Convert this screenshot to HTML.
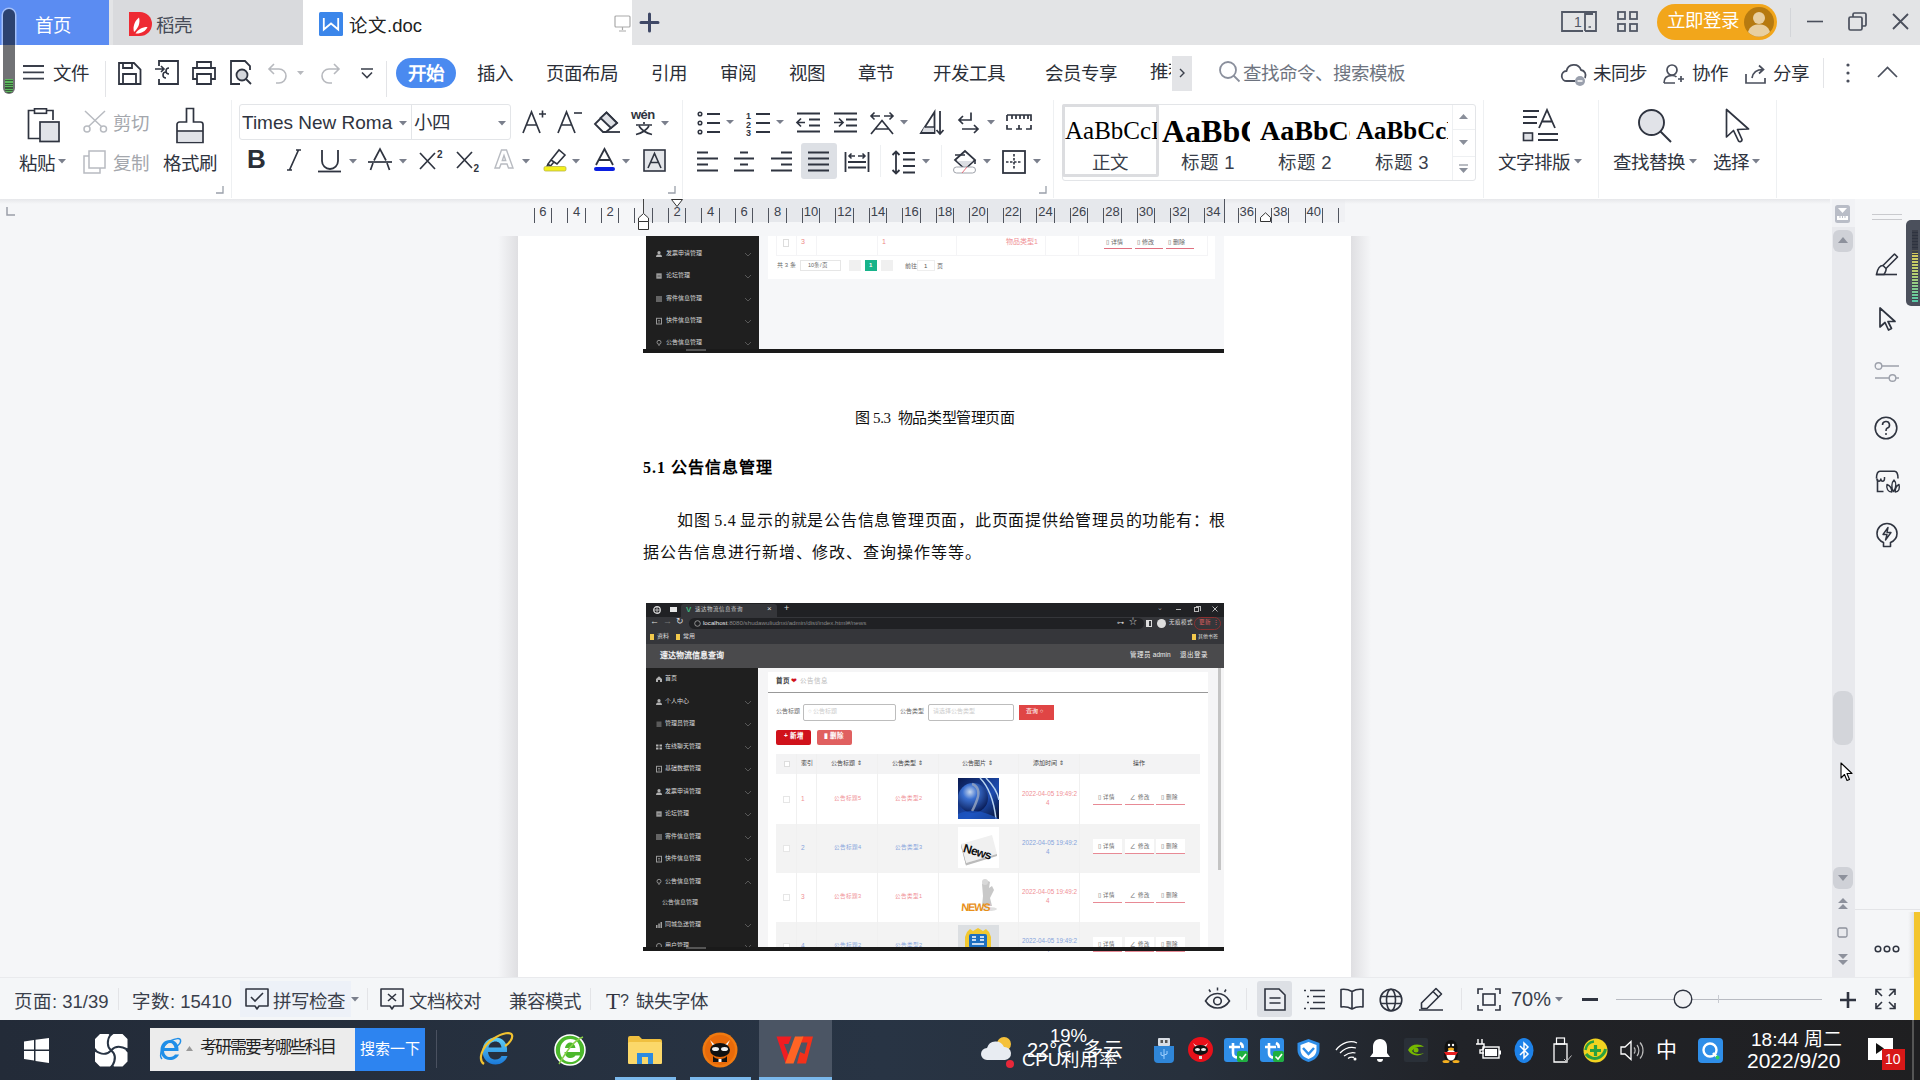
<!DOCTYPE html>
<html lang="zh-CN"><head><meta charset="utf-8">
<style>
*{margin:0;padding:0;box-sizing:border-box}
html,body{width:1920px;height:1080px;overflow:hidden;background:#f5f6f8;font-family:"Liberation Sans",sans-serif;color:#333}
.a{position:absolute}
.t{position:absolute;white-space:nowrap;line-height:1}
svg{position:absolute;overflow:visible}
#tabbar{left:0;top:0;width:1920px;height:45px;background:#e3e4e6}
#menubar{left:0;top:45px;width:1920px;height:55px;background:#fff}
#ribbon{left:0;top:100px;width:1920px;height:99px;background:#fff}
#ruler{left:0;top:199px;width:1830px;height:37px;background:#f3f4f7}
#doc{left:0;top:236px;width:1830px;height:742px;background:#f3f4f7}
#page{left:518px;top:236px;width:833px;height:742px;background:#fff}
#vscroll{left:1830px;top:199px;width:25px;height:779px;background:#e9eaee}
#rpanel{left:1855px;top:199px;width:65px;height:779px;background:#f3f4f7}
#status{left:0;top:978px;width:1920px;height:42px;background:#f8f9fb}
#taskbar{left:0;top:1020px;width:1920px;height:60px;background:#1e2636}
</style></head><body>
<div id="tabbar" class="a">
 <div class="a" style="left:0;top:0;width:109px;height:45px;background:#5b8cf2"></div>
 <div class="t" style="left:35px;top:17px;font-size:18.5px;color:#fff;letter-spacing:-1px">首页</div>
 <div class="a" style="left:113px;top:0;width:190px;height:45px;background:#d9dadd"></div>
 <svg style="left:129px;top:12px" width="24" height="24" viewBox="0 0 24 24"><path d="M0 0H11A12 12 0 0 1 11 24H0Z" fill="#ee2a33"/><path d="M5 20C3.5 15 5.5 9 10 5.5C11.5 10.5 9.5 16 5 20Z" fill="#fff"/><path d="M6.5 21.5C9 17.5 13 15 18.5 15C16.5 19.5 11.5 22 6.5 21.5Z" fill="#fff"/></svg>
 <div class="t" style="left:156px;top:17px;font-size:18.5px;color:#454a57;letter-spacing:-1px">稻壳</div>
 <div class="a" style="left:303px;top:0;width:329px;height:45px;background:#fff"></div>
 <svg style="left:319px;top:12px" width="24" height="24" viewBox="0 0 24 24"><rect width="24" height="24" rx="1.5" fill="#3b86ea"/><path d="M4.8 6V17.5L12 11.5L19.2 17.5V6" fill="none" stroke="#fff" stroke-width="1.8" stroke-linejoin="miter"/></svg>
 <div class="t" style="left:349px;top:17px;font-size:18.5px;color:#222">论文.doc</div>
 <svg style="left:614px;top:15px" width="18" height="17" viewBox="0 0 18 17"><rect x="1" y="1" width="15" height="11" rx="1" fill="none" stroke="#aaa" stroke-width="1.2"/><path d="M8.5 12V15M5 16H12" stroke="#aaa" stroke-width="1.2"/></svg>
 <svg style="left:640px;top:13px" width="19" height="19" viewBox="0 0 19 19"><path d="M9.5 1V18M1 9.5H18" stroke="#3f4866" stroke-width="3" stroke-linecap="round"/></svg>
 <svg style="left:1561px;top:11px" width="36" height="21" viewBox="0 0 36 21"><path d="M22 20H1V1H35V20H24" fill="none" stroke="#525866" stroke-width="1.8"/><path d="M24 20V3H32" fill="none" stroke="#525866" stroke-width="1.8"/><path d="M27.5 16H30" stroke="#525866" stroke-width="1.5"/><text x="13" y="16" font-size="14" fill="#525866" font-family="Liberation Sans">1</text></svg>
 <svg style="left:1617px;top:11px" width="21" height="21" viewBox="0 0 21 21"><g fill="none" stroke="#525866" stroke-width="1.8"><rect x="1" y="1" width="7" height="7"/><rect x="13" y="1" width="7" height="7"/><rect x="1" y="13" width="7" height="7"/><rect x="13" y="13" width="7" height="7"/></g></svg>
 <div class="a" style="left:1657px;top:4px;width:120px;height:36px;border-radius:18px;background:#f2a61b"></div>
 <div class="t" style="left:1667px;top:12px;font-size:18.5px;color:#fff;letter-spacing:-1px">立即登录</div>
 <svg style="left:1744px;top:7px" width="30" height="30" viewBox="0 0 30 30"><circle cx="15" cy="15" r="15" fill="#b67a10"/><circle cx="15" cy="11" r="6" fill="#e8cfa0"/><path d="M4 25C6 19 10 17.5 15 17.5C20 17.5 24 19 26 25A15 15 0 0 1 4 25Z" fill="#e8cfa0"/></svg>
 <div class="a" style="left:1790px;top:8px;width:1px;height:29px;background:#d3d5d9"></div>
 <svg style="left:1807px;top:20px" width="16" height="3" viewBox="0 0 16 3"><path d="M0 1.5H16" stroke="#4a4f5c" stroke-width="1.6"/></svg>
 <svg style="left:1848px;top:12px" width="19" height="19" viewBox="0 0 19 19"><g fill="none" stroke="#4a4f5c" stroke-width="1.7"><rect x="1" y="5" width="13" height="13" rx="1.5"/><path d="M5 5V2.5A1.5 1.5 0 0 1 6.5 1H16.5A1.5 1.5 0 0 1 18 2.5V12.5A1.5 1.5 0 0 1 16.5 14H14"/></g></svg>
 <svg style="left:1892px;top:13px" width="17" height="17" viewBox="0 0 17 17"><path d="M1 1L16 16M16 1L1 16" stroke="#4a4f5c" stroke-width="1.8"/></svg>

</div>
<div id="menubar" class="a">
 <svg style="left:23px;top:20px" width="21" height="15" viewBox="0 0 21 15"><path d="M0 1H21M0 7.3H21M0 13.6H21" stroke="#3a3f4b" stroke-width="1.8"/></svg>
 <div class="t" style="left:53px;top:20px;font-size:18.5px;color:#2b2f38;letter-spacing:-1px">文件</div>
 <div class="a" style="left:105px;top:16px;width:1px;height:36px;background:#e3e4e7"></div>
 <svg style="left:118px;top:17px" width="24" height="23" viewBox="0 0 24 23"><path d="M1 1H16L22.5 7.5V22H1Z" fill="none" stroke="#2f3440" stroke-width="1.8"/><path d="M5 22V12H18V22M5 1V6H14V1" fill="none" stroke="#2f3440" stroke-width="1.8"/></svg>
 <svg style="left:155px;top:15px" width="25" height="25" viewBox="0 0 25 25"><path d="M4 6V1H23V24H4V19" fill="none" stroke="#2f3440" stroke-width="1.8"/><path d="M0 9H9M6 6L9 9L6 12" fill="none" stroke="#2f3440" stroke-width="1.6"/><path d="M14 14A3 3 0 1 1 14 8M11 12A3 3 0 1 0 11 18" fill="none" stroke="#2f3440" stroke-width="1.6"/></svg>
 <svg style="left:192px;top:16px" width="24" height="24" viewBox="0 0 24 24"><path d="M5 7V1H19V7" fill="none" stroke="#2f3440" stroke-width="1.8"/><path d="M5 18H1V7H23V18H19" fill="none" stroke="#2f3440" stroke-width="1.8"/><path d="M5 13H19V23H5Z" fill="none" stroke="#2f3440" stroke-width="1.8"/></svg>
 <svg style="left:230px;top:15px" width="24" height="25" viewBox="0 0 24 25"><path d="M10 24H1V1H15L20 6V10" fill="none" stroke="#2f3440" stroke-width="1.8"/><circle cx="12" cy="15" r="5.5" fill="#d4d6db" stroke="#2f3440" stroke-width="1.8"/><path d="M16 19L21 24" stroke="#2f3440" stroke-width="1.8"/></svg>
 <svg style="left:268px;top:18px" width="40" height="20" viewBox="0 0 40 20"><path d="M6 1L1 6L6 11M1 6H11A7 7 0 0 1 11 20H8" fill="none" stroke="#b7b9be" stroke-width="1.6"/><path d="M29 8H36L32.5 12Z" fill="#b7b9be"/></svg>
 <svg style="left:319px;top:18px" width="22" height="20" viewBox="0 0 22 20"><path d="M15 1L20 6L15 11M20 6H10A7 7 0 0 0 10 20H13" fill="none" stroke="#b7b9be" stroke-width="1.6"/></svg>
 <svg style="left:360px;top:23px" width="14" height="11" viewBox="0 0 14 11"><path d="M1 1H13M2 4.5L7 9.5L12 4.5" fill="none" stroke="#3a3f4b" stroke-width="1.6"/></svg>
 <div class="a" style="left:386px;top:16px;width:1px;height:36px;background:#e3e4e7"></div>
 <div class="a" style="left:396px;top:13px;width:60px;height:30px;border-radius:15px;background:#4a8af0"></div>
 <div class="t" style="left:408px;top:20px;font-size:18.5px;color:#fff;letter-spacing:-1px;font-weight:bold">开始</div>
 <div class="t" style="left:477px;top:20px;font-size:18.5px;color:#2b2f38;letter-spacing:-1px">插入</div>
 <div class="t" style="left:546px;top:20px;font-size:18.5px;color:#2b2f38;letter-spacing:-1px">页面布局</div>
 <div class="t" style="left:651px;top:20px;font-size:18.5px;color:#2b2f38;letter-spacing:-1px">引用</div>
 <div class="t" style="left:720px;top:20px;font-size:18.5px;color:#2b2f38;letter-spacing:-1px">审阅</div>
 <div class="t" style="left:789px;top:20px;font-size:18.5px;color:#2b2f38;letter-spacing:-1px">视图</div>
 <div class="t" style="left:858px;top:20px;font-size:18.5px;color:#2b2f38;letter-spacing:-1px">章节</div>
 <div class="t" style="left:933px;top:20px;font-size:18.5px;color:#2b2f38;letter-spacing:-1px">开发工具</div>
 <div class="t" style="left:1045px;top:20px;font-size:18.5px;color:#2b2f38;letter-spacing:-1px">会员专享</div>
 <div class="a" style="left:1150px;top:18px;width:21px;height:20px;overflow:hidden"><div class="t" style="left:0;top:0;font-size:18.5px;color:#2b2f38;letter-spacing:-1px">推荐</div></div>
 <div class="a" style="left:1172px;top:11px;width:20px;height:35px;background:#e3e4e7"></div>
 <svg style="left:1179px;top:23px" width="6" height="10" viewBox="0 0 6 10"><path d="M1 1L5 5L1 9" fill="none" stroke="#3a3f4b" stroke-width="1.4"/></svg>
 <svg style="left:1219px;top:16px" width="22" height="22" viewBox="0 0 22 22"><circle cx="9" cy="9" r="8" fill="none" stroke="#8a8f9c" stroke-width="1.8"/><path d="M14.5 14.5L20.5 20.5" stroke="#8a8f9c" stroke-width="1.8"/></svg>
 <div class="t" style="left:1243px;top:20px;font-size:18.5px;color:#6e7480;letter-spacing:-1px">查找命令、搜索模板</div>
 <svg style="left:1561px;top:18px" width="26" height="24" viewBox="0 0 26 24"><path d="M14 18H6A5 5 0 0 1 5.5 8A7.5 7.5 0 0 1 20 7A5.5 5.5 0 0 1 24 15" fill="none" stroke="#4a4f5c" stroke-width="1.8"/><circle cx="19" cy="18" r="5" fill="#9aa0ad"/><path d="M16.5 18H21.5" stroke="#fff" stroke-width="1.5"/></svg>
 <div class="t" style="left:1593px;top:20px;font-size:18.5px;color:#2b2f38;letter-spacing:-1px">未同步</div>
 <svg style="left:1663px;top:19px" width="22" height="20" viewBox="0 0 22 20"><circle cx="9" cy="6" r="5" fill="none" stroke="#4a4f5c" stroke-width="1.7"/><path d="M1 19C1 14 4 11.5 9 11.5C11 11.5 12.5 12 13.5 13M1 19H12M15 15H21M18 12V18" fill="none" stroke="#4a4f5c" stroke-width="1.7"/></svg>
 <div class="t" style="left:1692px;top:20px;font-size:18.5px;color:#2b2f38;letter-spacing:-1px">协作</div>
 <svg style="left:1745px;top:19px" width="22" height="20" viewBox="0 0 22 20"><path d="M1 10V19H20V14" fill="none" stroke="#4a4f5c" stroke-width="1.7"/><path d="M7 14C8 8 12 5.5 18 5.5M14 1.5L18.5 5.5L14 9.5" fill="none" stroke="#4a4f5c" stroke-width="1.7"/></svg>
 <div class="t" style="left:1773px;top:20px;font-size:18.5px;color:#2b2f38;letter-spacing:-1px">分享</div>
 <div class="a" style="left:1823px;top:13px;width:1px;height:30px;background:#e3e4e7"></div>
 <svg style="left:1846px;top:18px" width="4" height="20" viewBox="0 0 4 20"><circle cx="2" cy="2" r="1.6" fill="#4a4f5c"/><circle cx="2" cy="10" r="1.6" fill="#4a4f5c"/><circle cx="2" cy="18" r="1.6" fill="#4a4f5c"/></svg>
 <svg style="left:1877px;top:21px" width="21" height="12" viewBox="0 0 21 12"><path d="M1 11L10.5 1.5L20 11" fill="none" stroke="#4a4f5c" stroke-width="1.7"/></svg>
</div>
<div id="ribbon" class="a"></div>
<div id="ribc"><svg style="left:27px;top:108px" width="34" height="36" viewBox="0 0 34 36"><path d="M13 30.5H1.5V2.5H26V12" fill="none" stroke="#2f3440" stroke-width="1.7"/><rect x="7.5" y="0.8" width="12" height="4.5" fill="#fff" stroke="#2f3440" stroke-width="1.6"/><rect x="13" y="14" width="19" height="19.5" fill="#e1e3e8" stroke="#2f3440" stroke-width="1.7"/></svg>
<div class="t" style="left:19px;top:155px;font-size:18.5px;color:#2f3440;letter-spacing:-1px;">粘贴</div><svg style="left:58px;top:159px" width="8" height="5" viewBox="0 0 8 5"><path d="M0 0H8L4 4.5Z" fill="#7a7f8c"/></svg>
<svg style="left:83px;top:110px" width="25" height="23" viewBox="0 0 25 23"><path d="M2 1L19 17M22 1L5 17" stroke="#b8bbc1" stroke-width="1.5"/><circle cx="4" cy="19" r="3" fill="#fff" stroke="#b8bbc1" stroke-width="1.5"/><circle cx="20.5" cy="19" r="3" fill="#fff" stroke="#b8bbc1" stroke-width="1.5"/></svg>
<div class="t" style="left:113px;top:115px;font-size:18.5px;color:#a4a7ad;letter-spacing:-1px;">剪切</div>
<svg style="left:83px;top:150px" width="23" height="24" viewBox="0 0 23 24"><path d="M6 6H1V23H17V18" fill="none" stroke="#b8bbc1" stroke-width="1.5"/><rect x="6" y="1" width="16" height="17" fill="#fff" stroke="#b8bbc1" stroke-width="1.5"/></svg>
<div class="t" style="left:113px;top:155px;font-size:18.5px;color:#a4a7ad;letter-spacing:-1px;">复制</div>
<svg style="left:176px;top:107px" width="28" height="37" viewBox="0 0 28 37"><path d="M10.5 1.5H17.5V15H24.5A2.5 2.5 0 0 1 27 17.5V35.5H1V17.5A2.5 2.5 0 0 1 3.5 15H10.5Z" fill="#fff" stroke="#2f3440" stroke-width="1.7"/><rect x="2" y="24.5" width="24" height="10.2" fill="#e1e3e8"/><path d="M1 24H27" stroke="#2f3440" stroke-width="1.6"/></svg>
<div class="t" style="left:163px;top:155px;font-size:18.5px;color:#2f3440;letter-spacing:-1px;">格式刷</div>
<svg style="left:216px;top:186px" width="8" height="8" viewBox="0 0 8 8"><path d="M7 0V7H0" fill="none" stroke="#9aa0aa" stroke-width="1.3"/></svg>
<div class="a" style="left:231px;top:100px;width:1px;height:98px;background:#eef0f2"></div>
<div class="a" style="left:239px;top:104px;width:272px;height:36px;border:1px solid #e3e5e8;border-radius:3px"></div>
<div class="a" style="left:411px;top:105px;width:1px;height:34px;background:#e3e5e8"></div>
<div class="a" style="left:242px;top:111px;width:151px;height:22px;overflow:hidden"><div class="t" style="left:0;top:2px;font-size:19px;color:#2f3440">Times New Roman</div></div>
<svg style="left:399px;top:121px" width="8" height="5" viewBox="0 0 8 5"><path d="M0 0H8L4 4.5Z" fill="#7a7f8c"/></svg>
<div class="t" style="left:414px;top:114px;font-size:18.5px;color:#2f3440;letter-spacing:-1px;">小四</div>
<svg style="left:498px;top:121px" width="8" height="5" viewBox="0 0 8 5"><path d="M0 0H8L4 4.5Z" fill="#7a7f8c"/></svg>
<svg style="left:522px;top:109px" width="25" height="25" viewBox="0 0 25 25"><path d="M1 24L9.5 3L18 24M4.5 16H14.5" fill="none" stroke="#2f3440" stroke-width="1.7"/><path d="M17 5H24M20.5 1.5V8.5" stroke="#2f3440" stroke-width="1.6"/></svg>
<svg style="left:557px;top:109px" width="26" height="25" viewBox="0 0 26 25"><path d="M1 24L9.5 3L18 24M4.5 16H14.5" fill="none" stroke="#2f3440" stroke-width="1.7"/><path d="M17 4H25" stroke="#2f3440" stroke-width="1.6"/></svg>
<svg style="left:594px;top:111px" width="27" height="23" viewBox="0 0 27 23"><path d="M1 13L12.5 1.5L23 12L12 21H9Z" fill="#fff" stroke="#2f3440" stroke-width="1.8"/><path d="M12.5 1.5L23 12L17 17L6.5 7Z" fill="#dfe1e6" stroke="#2f3440" stroke-width="1.8"/><path d="M12 21H26" stroke="#2f3440" stroke-width="1.8"/></svg>
<div class="t" style="left:631px;top:108px;font-size:13px;color:#2f3440;font-weight:bold;letter-spacing:-0.5px">wén</div>
<svg style="left:634px;top:122px" width="20" height="13" viewBox="0 0 20 13"><path d="M10 0V2M2 3H18M5 4C8 9 12 11 18 12.5M15 4C12 9 8 11 2 12.5" fill="none" stroke="#2f3440" stroke-width="1.7"/></svg>
<svg style="left:661px;top:121px" width="8" height="5" viewBox="0 0 8 5"><path d="M0 0H8L4 4.5Z" fill="#7a7f8c"/></svg>
<div class="t" style="left:247px;top:146px;font-size:26px;font-weight:bold;color:#2b2f38">B</div>
<svg style="left:287px;top:149px" width="14" height="22" viewBox="0 0 14 22"><path d="M9 1H14M0 21H5M11.5 1L2.5 21" fill="none" stroke="#2f3440" stroke-width="1.7"/></svg>
<svg style="left:318px;top:149px" width="24" height="24" viewBox="0 0 24 24"><path d="M4 1V12A8 8 0 0 0 20 12V1" fill="none" stroke="#2f3440" stroke-width="1.8"/><path d="M0 22.5H23" stroke="#2f3440" stroke-width="1.8"/></svg>
<svg style="left:349px;top:159px" width="8" height="5" viewBox="0 0 8 5"><path d="M0 0H8L4 4.5Z" fill="#7a7f8c"/></svg>
<svg style="left:368px;top:148px" width="24" height="23" viewBox="0 0 24 23"><path d="M2.5 22L5 15M19 15L21.5 22M6 12.5L12 1L18 12.5" fill="none" stroke="#2f3440" stroke-width="1.7"/><path d="M0 14H24" stroke="#2f3440" stroke-width="1.7"/></svg>
<svg style="left:399px;top:159px" width="8" height="5" viewBox="0 0 8 5"><path d="M0 0H8L4 4.5Z" fill="#7a7f8c"/></svg>
<svg style="left:419px;top:149px" width="26" height="22" viewBox="0 0 26 22"><path d="M1 4L16 20M16 4L1 20" stroke="#2f3440" stroke-width="1.7"/><text x="18" y="9" font-size="10" font-weight="bold" fill="#2f3440" font-family="Liberation Sans">2</text></svg>
<svg style="left:456px;top:151px" width="26" height="22" viewBox="0 0 26 22"><path d="M1 1L16 17M16 1L1 17" stroke="#2f3440" stroke-width="1.7"/><text x="17.5" y="21" font-size="10" font-weight="bold" fill="#2f3440" font-family="Liberation Sans">2</text></svg>
<svg style="left:494px;top:149px" width="20" height="20" viewBox="0 0 20 20"><path d="M1 19L7.5 1H12.5L19 19H14.5L13 15H7L5.5 19ZM8.3 11.5H11.7L10 6.5Z" fill="#fff" stroke="#b8bbc1" stroke-width="1.4"/></svg>
<svg style="left:522px;top:159px" width="8" height="5" viewBox="0 0 8 5"><path d="M0 0H8L4 4.5Z" fill="#7a7f8c"/></svg>
<svg style="left:543px;top:148px" width="24" height="24" viewBox="0 0 24 24"><path d="M8 12L16 2L22 7L14 16Z M8 12L5 16L7.5 18L10.5 14.5" fill="#fff" stroke="#2f3440" stroke-width="1.6"/><path d="M5 16L4 18H8" stroke="#2f3440" stroke-width="1.4" fill="none"/><rect x="1" y="18.5" width="22" height="4.5" rx="1.5" fill="#f4f01a" stroke="#b7b44a" stroke-width="0.8"/></svg>
<svg style="left:572px;top:159px" width="8" height="5" viewBox="0 0 8 5"><path d="M0 0H8L4 4.5Z" fill="#7a7f8c"/></svg>
<svg style="left:593px;top:148px" width="23" height="24" viewBox="0 0 23 24"><path d="M3 17L11.5 1L20 17M6 12H17" fill="none" stroke="#2f3440" stroke-width="1.8"/><rect x="1" y="19" width="21" height="4" rx="2" fill="#0b1fe0"/></svg>
<svg style="left:622px;top:159px" width="8" height="5" viewBox="0 0 8 5"><path d="M0 0H8L4 4.5Z" fill="#7a7f8c"/></svg>
<svg style="left:643px;top:149px" width="23" height="23" viewBox="0 0 23 23"><rect x="1" y="1" width="21" height="21" fill="#e4e6ea" stroke="#2f3440" stroke-width="1.6"/><path d="M5 19L11.5 4.5L18 19M7.5 13.5H15.5" fill="none" stroke="#2f3440" stroke-width="1.6"/></svg>
<svg style="left:668px;top:186px" width="8" height="8" viewBox="0 0 8 8"><path d="M7 0V7H0" fill="none" stroke="#9aa0aa" stroke-width="1.3"/></svg>
<div class="a" style="left:682px;top:100px;width:1px;height:98px;background:#eef0f2"></div>
<svg style="left:697px;top:111px" width="38" height="24" viewBox="0 0 38 24"><g fill="none" stroke="#2f3440" stroke-width="1.5"><circle cx="3" cy="3" r="1.8"/><circle cx="3" cy="12" r="1.8"/><circle cx="3" cy="21" r="1.8"/></g><path d="M10 3H23M10 12H23M10 21H23" stroke="#2f3440" stroke-width="1.8"/><path d="M29 9H37L33 13Z" fill="#7a7f8c"/></svg>
<svg style="left:746px;top:110px" width="38" height="25" viewBox="0 0 38 25"><text x="0" y="9" font-size="9" font-weight="bold" fill="#2f3440" font-family="Liberation Sans">1</text><text x="0" y="17.5" font-size="9" font-weight="bold" fill="#2f3440" font-family="Liberation Sans">2</text><text x="0" y="26" font-size="9" font-weight="bold" fill="#2f3440" font-family="Liberation Sans">3</text><path d="M10 4H24M10 13H24M10 22H24" stroke="#2f3440" stroke-width="1.8"/><path d="M30 10H38L34 14Z" fill="#7a7f8c"/></svg>
<svg style="left:796px;top:112px" width="25" height="21" viewBox="0 0 25 21"><path d="M1 1.5H24M13 7.5H24M13 13.5H24M1 19.5H24" stroke="#2f3440" stroke-width="1.8"/><path d="M9 10.5H1M5 6.5L1 10.5L5 14.5" fill="none" stroke="#2f3440" stroke-width="1.7"/></svg>
<svg style="left:833px;top:112px" width="25" height="21" viewBox="0 0 25 21"><path d="M1 1.5H24M13 7.5H24M13 13.5H24M1 19.5H24" stroke="#2f3440" stroke-width="1.8"/><path d="M1 10.5H10M6 6.5L10 10.5L6 14.5" fill="none" stroke="#2f3440" stroke-width="1.7"/></svg>
<svg style="left:870px;top:111px" width="25" height="24" viewBox="0 0 25 24"><path d="M1 5H10M4.5 1.5L1 5L4.5 8.5M14 5H23M19.5 1.5L23 5L19.5 8.5" fill="none" stroke="#2f3440" stroke-width="1.6"/><path d="M1 23L12 9.5L23 23M5 18H19" fill="none" stroke="#2f3440" stroke-width="1.7"/></svg>
<svg style="left:900px;top:120px" width="8" height="5" viewBox="0 0 8 5"><path d="M0 0H8L4 4.5Z" fill="#7a7f8c"/></svg>
<svg style="left:920px;top:110px" width="25" height="26" viewBox="0 0 25 26"><path d="M1 23L14.5 2V23Z" fill="#fff" stroke="#2f3440" stroke-width="1.8"/><path d="M4 17.5H14V22H2Z" fill="#dcdee3"/><path d="M5 17H14" stroke="#2f3440" stroke-width="1.5"/><path d="M20 1V24M16.5 20L20 24L23.5 20" fill="none" stroke="#2f3440" stroke-width="1.8"/></svg>
<svg style="left:958px;top:111px" width="22" height="22" viewBox="0 0 22 22"><path d="M13 1.5V9H1M5 5L1 9L5 13M4 18H20M16 14L20 18L16 22" fill="none" stroke="#2f3440" stroke-width="1.7"/></svg>
<svg style="left:987px;top:120px" width="8" height="5" viewBox="0 0 8 5"><path d="M0 0H8L4 4.5Z" fill="#7a7f8c"/></svg>
<svg style="left:1006px;top:114px" width="26" height="16" viewBox="0 0 26 16"><path d="M1 1H25V7M1 1V7M1 11V15H6M10 15H16M13 11V15M20 15H25V11M6 1V5M10 1V5M14 1V5M18 1V5M22 1V5" fill="none" stroke="#2f3440" stroke-width="1.7"/></svg>
<div class="a" style="left:801px;top:143px;width:36px;height:36px;border-radius:3px;background:#dde0e5"></div>
<svg style="left:697px;top:151px" width="24" height="21" viewBox="0 0 24 21"><path d="M0 1.5H11M0 7.5H21M0 13.5H11M0 19.5H21" stroke="#2f3440" stroke-width="1.9"/></svg>
<svg style="left:734px;top:151px" width="24" height="21" viewBox="0 0 24 21"><path d="M6 1.5H14M0 7.5H20M6 13.5H14M0 19.5H20" stroke="#2f3440" stroke-width="1.9"/></svg>
<svg style="left:771px;top:151px" width="24" height="21" viewBox="0 0 24 21"><path d="M10 1.5H21M0 7.5H21M10 13.5H21M0 19.5H21" stroke="#2f3440" stroke-width="1.9"/></svg>
<svg style="left:808px;top:151px" width="24" height="21" viewBox="0 0 24 21"><path d="M0 1.5H21M0 7.5H21M0 13.5H21M0 19.5H21" stroke="#2f3440" stroke-width="1.9"/></svg>
<svg style="left:844px;top:151px" width="26" height="22" viewBox="0 0 26 22"><path d="M1.5 1V21M24.5 1V21M4 11H22M4 16.5H22" stroke="#2f3440" stroke-width="1.8"/><path d="M5 5H11M7.5 2.5L5 5L7.5 7.5M14 5H21M18.5 2.5L21 5L18.5 7.5" fill="none" stroke="#2f3440" stroke-width="1.5"/></svg>
<div class="a" style="left:880px;top:145px;width:1px;height:32px;background:#eef0f2"></div>
<svg style="left:891px;top:150px" width="26" height="25" viewBox="0 0 26 25"><path d="M5 1V24M1.5 5L5 1.5L8.5 5M1.5 20L5 23.5L8.5 20" fill="none" stroke="#2f3440" stroke-width="1.8"/><path d="M12 3H24M12 9.5H24M12 16H24M12 22.5H24" stroke="#2f3440" stroke-width="1.8"/></svg>
<svg style="left:922px;top:159px" width="8" height="5" viewBox="0 0 8 5"><path d="M0 0H8L4 4.5Z" fill="#7a7f8c"/></svg>
<div class="a" style="left:941px;top:145px;width:1px;height:32px;background:#eef0f2"></div>
<svg style="left:953px;top:148px" width="24" height="26" viewBox="0 0 24 26"><path d="M2 12L12 3L22 12L12 21Z" fill="#fff" stroke="#2f3440" stroke-width="1.7"/><path d="M4 13H20L12 20Z" fill="#dcdee3"/><path d="M2 7H12M22 12V16" stroke="#2f3440" stroke-width="1.6"/><rect x="0.5" y="19" width="22" height="6" rx="3" fill="#fff" stroke="#9ea2aa" stroke-width="1"/><path d="M9 25L14 19" stroke="#e05060" stroke-width="0.8"/></svg>
<svg style="left:983px;top:159px" width="8" height="5" viewBox="0 0 8 5"><path d="M0 0H8L4 4.5Z" fill="#7a7f8c"/></svg>
<svg style="left:1002px;top:150px" width="24" height="24" viewBox="0 0 24 24"><rect x="1" y="1" width="22" height="22" fill="none" stroke="#2f3440" stroke-width="1.8"/><path d="M12 4V20M4 12H20" stroke="#2f3440" stroke-width="1.6" stroke-dasharray="2.5 1.5"/></svg>
<svg style="left:1033px;top:159px" width="8" height="5" viewBox="0 0 8 5"><path d="M0 0H8L4 4.5Z" fill="#7a7f8c"/></svg>
<svg style="left:1039px;top:186px" width="8" height="8" viewBox="0 0 8 8"><path d="M7 0V7H0" fill="none" stroke="#9aa0aa" stroke-width="1.3"/></svg>
<div class="a" style="left:1053px;top:100px;width:1px;height:98px;background:#eef0f2"></div>
<div class="a" style="left:1062px;top:104px;width:414px;height:77px;border:1px solid #e3e5e8;border-radius:3px"></div>
<div class="a" style="left:1062px;top:104px;width:97px;height:73px;border:3px solid #dcdde0;border-radius:2px"></div>
<div class="a" style="left:1452px;top:105px;width:1px;height:75px;background:#eef0f2"></div>
<div class="a" style="left:1453px;top:129px;width:22px;height:1px;background:#eef0f2"></div>
<div class="a" style="left:1453px;top:156px;width:22px;height:1px;background:#eef0f2"></div>
<svg style="left:1459px;top:114px" width="9" height="5" viewBox="0 0 9 5"><path d="M0 5H9L4.5 0Z" fill="#8a8f9a"/></svg>
<svg style="left:1459px;top:140px" width="9" height="5" viewBox="0 0 9 5"><path d="M0 0H9L4.5 5Z" fill="#8a8f9a"/></svg>
<svg style="left:1459px;top:164px" width="9" height="9" viewBox="0 0 9 9"><path d="M0 1H9" stroke="#8a8f9a" stroke-width="1.2"/><path d="M0 4H9L4.5 9Z" fill="#8a8f9a"/></svg>
<div class="a" style="left:1065px;top:112px;width:92px;height:36px;overflow:hidden"><div class="t" style="left:0;top:6px;font-family:'Liberation Serif',serif;font-size:25px;color:#000">AaBbCcI</div></div>
<div class="a" style="left:1162px;top:112px;width:88px;height:36px;overflow:hidden"><div class="t" style="left:0;top:3px;font-family:'Liberation Serif',serif;font-size:32px;font-weight:bold;color:#000">AaBbCc</div></div>
<div class="a" style="left:1260px;top:112px;width:90px;height:36px;overflow:hidden"><div class="t" style="left:0;top:5px;font-family:'Liberation Serif',serif;font-size:28px;font-weight:bold;color:#000">AaBbCc</div></div>
<div class="a" style="left:1356px;top:112px;width:92px;height:36px;overflow:hidden"><div class="t" style="left:0;top:6px;font-family:'Liberation Serif',serif;font-size:25px;font-weight:bold;color:#000">AaBbCcI</div></div>
<div class="t" style="left:1092px;top:154px;font-size:18.5px;color:#3a3f4b;letter-spacing:-1px;">正文</div>
<div class="t" style="left:1181px;top:154px;font-size:18.5px;color:#3a3f4b;">标题 1</div>
<div class="t" style="left:1278px;top:154px;font-size:18.5px;color:#3a3f4b;">标题 2</div>
<div class="t" style="left:1375px;top:154px;font-size:18.5px;color:#3a3f4b;">标题 3</div>
<div class="a" style="left:1483px;top:100px;width:1px;height:98px;background:#eef0f2"></div>
<svg style="left:1522px;top:109px" width="37" height="33" viewBox="0 0 37 33"><path d="M1 2H17M1 8H15M1 14H15" stroke="#2f3440" stroke-width="1.8"/><path d="M17 19L25 1L33 19M20 12.5H30" fill="none" stroke="#2f3440" stroke-width="1.8"/><rect x="1.5" y="24" width="9" height="7.5" fill="#dfe1e6" stroke="#2f3440" stroke-width="1.6"/><path d="M16 25H36M16 31H36" stroke="#2f3440" stroke-width="1.8"/></svg>
<div class="t" style="left:1498px;top:154px;font-size:18.5px;color:#2f3440;letter-spacing:-1px;">文字排版</div><svg style="left:1574px;top:159px" width="8" height="5" viewBox="0 0 8 5"><path d="M0 0H8L4 4.5Z" fill="#7a7f8c"/></svg>
<div class="a" style="left:1598px;top:100px;width:1px;height:98px;background:#eef0f2"></div>
<svg style="left:1637px;top:108px" width="36" height="36" viewBox="0 0 36 36"><circle cx="14.5" cy="14.5" r="12.5" fill="#e1e3e8" stroke="#2f3440" stroke-width="1.9"/><path d="M23.5 23.5L34 34" stroke="#2f3440" stroke-width="1.9"/></svg>
<div class="t" style="left:1613px;top:154px;font-size:18.5px;color:#2f3440;letter-spacing:-1px;">查找替换</div><svg style="left:1689px;top:159px" width="8" height="5" viewBox="0 0 8 5"><path d="M0 0H8L4 4.5Z" fill="#7a7f8c"/></svg>
<svg style="left:1725px;top:108px" width="26" height="36" viewBox="0 0 26 36"><path d="M1.5 1.5V29L8.5 22.5L13.5 33A2 2 0 0 0 17 31.5L12.5 21.5L23.5 21Z" fill="#fff" stroke="#2f3440" stroke-width="1.7" stroke-linejoin="round"/></svg>
<div class="t" style="left:1713px;top:154px;font-size:18.5px;color:#2f3440;letter-spacing:-1px;">选择</div><svg style="left:1752px;top:159px" width="8" height="5" viewBox="0 0 8 5"><path d="M0 0H8L4 4.5Z" fill="#7a7f8c"/></svg>
<div class="a" style="left:1776px;top:100px;width:1px;height:98px;background:#eef0f2"></div></div>
<div id="docarea"><div class="a" style="left:0;top:199px;width:1830px;height:37px;background:#f5f6f8"></div>
<div class="a" style="left:1225px;top:199px;width:120px;height:23px;background:#f0f1f4"></div><div class="a" style="left:0;top:199px;width:1830px;height:5px;background:linear-gradient(#e6e7ea,rgba(245,246,248,0))"></div>
<div class="a" style="left:643px;top:199px;width:582px;height:23px;background:#e6e8ec"></div>
<svg style="left:6px;top:207px" width="9" height="9" viewBox="0 0 9 9"><path d="M1 0V8H9" fill="none" stroke="#9a9ea8" stroke-width="1.5"/></svg>
<svg style="left:0;top:0" width="1830" height="236" viewBox="0 0 1830 236"><path d="M534.5 208V223M551.5 208V223M567.5 208V223M585.5 208V223M601.5 208V223M618.5 208V223M634.5 208V223M652.5 208V223M668.5 208V223M685.5 208V223M701.5 208V223M719.5 208V223M735.5 208V223M752.5 208V223M768.5 208V223M786.5 208V223M802.5 208V223M819.5 208V223M835.5 208V223M853.5 208V223M869.5 208V223M886.5 208V223M902.5 208V223M920.5 208V223M936.5 208V223M953.5 208V223M969.5 208V223M987.5 208V223M1003.5 208V223M1020.5 208V223M1036.5 208V223M1054.5 208V223M1070.5 208V223M1087.5 208V223M1103.5 208V223M1121.5 208V223M1137.5 208V223M1154.5 208V223M1170.5 208V223M1188.5 208V223M1204.5 208V223M1238.5 208V223M1255.5 208V223M1271.5 208V223M1288.5 208V223M1305.5 208V223M1322.5 208V223M1338.5 208V223" stroke="#50545e" stroke-width="1"/><path d="M1224.5 199V223" stroke="#50545e" stroke-width="1"/></svg>
<div class="t" style="left:522.9px;top:205px;width:40px;text-align:center;font-size:13px;color:#3d424d">6</div>
<div class="t" style="left:556.5px;top:205px;width:40px;text-align:center;font-size:13px;color:#3d424d">4</div>
<div class="t" style="left:590.0px;top:205px;width:40px;text-align:center;font-size:13px;color:#3d424d">2</div>
<div class="t" style="left:657.0px;top:205px;width:40px;text-align:center;font-size:13px;color:#3d424d">2</div>
<div class="t" style="left:690.5px;top:205px;width:40px;text-align:center;font-size:13px;color:#3d424d">4</div>
<div class="t" style="left:724.0px;top:205px;width:40px;text-align:center;font-size:13px;color:#3d424d">6</div>
<div class="t" style="left:757.5px;top:205px;width:40px;text-align:center;font-size:13px;color:#3d424d">8</div>
<div class="t" style="left:791.0px;top:205px;width:40px;text-align:center;font-size:13px;color:#3d424d">10</div>
<div class="t" style="left:824.5px;top:205px;width:40px;text-align:center;font-size:13px;color:#3d424d">12</div>
<div class="t" style="left:858.0px;top:205px;width:40px;text-align:center;font-size:13px;color:#3d424d">14</div>
<div class="t" style="left:891.6px;top:205px;width:40px;text-align:center;font-size:13px;color:#3d424d">16</div>
<div class="t" style="left:925.1px;top:205px;width:40px;text-align:center;font-size:13px;color:#3d424d">18</div>
<div class="t" style="left:958.6px;top:205px;width:40px;text-align:center;font-size:13px;color:#3d424d">20</div>
<div class="t" style="left:992.1px;top:205px;width:40px;text-align:center;font-size:13px;color:#3d424d">22</div>
<div class="t" style="left:1025.6px;top:205px;width:40px;text-align:center;font-size:13px;color:#3d424d">24</div>
<div class="t" style="left:1059.1px;top:205px;width:40px;text-align:center;font-size:13px;color:#3d424d">26</div>
<div class="t" style="left:1092.6px;top:205px;width:40px;text-align:center;font-size:13px;color:#3d424d">28</div>
<div class="t" style="left:1126.1px;top:205px;width:40px;text-align:center;font-size:13px;color:#3d424d">30</div>
<div class="t" style="left:1159.6px;top:205px;width:40px;text-align:center;font-size:13px;color:#3d424d">32</div>
<div class="t" style="left:1193.2px;top:205px;width:40px;text-align:center;font-size:13px;color:#3d424d">34</div>
<div class="t" style="left:1226.7px;top:205px;width:40px;text-align:center;font-size:13px;color:#3d424d">36</div>
<div class="t" style="left:1260.2px;top:205px;width:40px;text-align:center;font-size:13px;color:#3d424d">38</div>
<div class="t" style="left:1293.7px;top:205px;width:40px;text-align:center;font-size:13px;color:#3d424d">40</div>

<svg style="left:637px;top:199px" width="50" height="32" viewBox="0 0 50 32"><path d="M6.5 0V14" stroke="#444" stroke-width="1"/><path d="M34.5 0.5H45.5L40 7.5Z" fill="#fff" stroke="#333" stroke-width="1"/><path d="M1.5 22.5V19L6.5 14.5L11.5 19V22.5H1.5V30.5H11.5V22.5" fill="#fff" stroke="#333" stroke-width="1"/><path d="M2 30H11V23H2Z" fill="#fff"/></svg>
<svg style="left:1260px;top:212px" width="12" height="11" viewBox="0 0 12 11"><path d="M0.5 9.5V5.5L5.5 0.8L10.5 5.5V9.5Z" fill="#fff" stroke="#333" stroke-width="1"/></svg>
<div class="a" style="left:498px;top:236px;width:20px;height:741px;background:linear-gradient(90deg,#f5f6f8,#dfdfe2)"></div>
<div class="a" style="left:1351px;top:236px;width:20px;height:741px;background:linear-gradient(90deg,#dfdfe2,#f5f6f8)"></div>
<div class="a" style="left:518px;top:236px;width:833px;height:741px;background:#fff"></div>
<div class="t" style="left:855px;top:411px;font-size:15px;letter-spacing:-0.35px;color:#111;font-family:'Liberation Serif',serif;">图 5.3&nbsp; 物品类型管理页面</div>
<div class="t" style="left:643px;top:460px;font-size:16px;color:#000;font-weight:bold;letter-spacing:1px;font-family:'Liberation Serif',serif;">5.1 公告信息管理</div>
<div class="t" style="left:677px;top:513px;font-size:16px;color:#111;font-family:'Liberation Serif',serif;word-spacing:-1px;letter-spacing:0.75px">如图 5.4 显示的就是公告信息管理页面，此页面提供给管理员的功能有：根</div>
<div class="t" style="left:643px;top:545px;font-size:16px;color:#111;font-family:'Liberation Serif',serif;letter-spacing:0.95px">据公告信息进行新增、修改、查询操作等等。</div></div>
<div id="shots"><div class="a" style="left:646px;top:236px;width:578px;height:114px;background:#f6f7f9"></div>
<div class="a" style="left:646px;top:236px;width:113px;height:114px;background:#1f1f1f"></div>
<div class="a" style="left:768px;top:236px;width:447px;height:43px;background:#fff"></div>
<div class="a" style="left:776px;top:236px;width:432px;height:20px;border:1px solid #f4f4f6;border-top:none"></div>
<div class="a" style="left:796px;top:236px;width:1px;height:20px;background:#f4f4f6"></div>
<div class="a" style="left:816px;top:236px;width:1px;height:20px;background:#f4f4f6"></div>
<div class="a" style="left:877px;top:236px;width:1px;height:20px;background:#f4f4f6"></div>
<div class="a" style="left:956px;top:236px;width:1px;height:20px;background:#f4f4f6"></div>
<div class="a" style="left:1045px;top:236px;width:1px;height:20px;background:#f4f4f6"></div>
<div class="a" style="left:1078px;top:236px;width:1px;height:20px;background:#f4f4f6"></div>
<div class="a" style="left:783px;top:239px;width:6px;height:8px;border:1px solid #ddd"></div>
<div class="t" style="left:801px;top:238px;font-size:7px;color:#e88;">3</div>
<div class="t" style="left:882px;top:238px;font-size:7px;color:#e88;">1</div>
<div class="t" style="left:1006px;top:238px;font-size:7px;color:#ef8f96;">物品类型1</div>
<div class="t" style="left:1106px;top:239px;font-size:6px;color:#666;">▯ 详情</div>
<div class="a" style="left:1104px;top:248px;width:28px;height:1px;background:#e07080"></div>
<div class="t" style="left:1137px;top:239px;font-size:6px;color:#666;">▯ 修改</div>
<div class="a" style="left:1135px;top:248px;width:28px;height:1px;background:#e07080"></div>
<div class="t" style="left:1168px;top:239px;font-size:6px;color:#666;">▯ 删除</div>
<div class="a" style="left:1166px;top:248px;width:28px;height:1px;background:#e07080"></div>
<div class="t" style="left:777px;top:262px;font-size:6px;color:#666;">共 3 条</div>
<div class="a" style="left:800px;top:260px;width:41px;height:11px;border:1px solid #e6e6e6;background:#fff"></div>
<div class="t" style="left:808px;top:263px;font-size:5.5px;color:#666;">10条/页</div>
<div class="a" style="left:849px;top:260px;width:12px;height:11px;background:#f0f0f0"></div>
<div class="a" style="left:865px;top:260px;width:12px;height:11px;background:#17b38a"></div>
<div class="t" style="left:869px;top:262px;font-size:6px;color:#fff;font-weight:bold">1</div>
<div class="a" style="left:881px;top:260px;width:12px;height:11px;background:#f0f0f0"></div>
<div class="t" style="left:905px;top:263px;font-size:6px;color:#666;">前往</div>
<div class="a" style="left:917px;top:260px;width:18px;height:11px;border:1px solid #eee;background:#fff"></div>
<div class="t" style="left:924px;top:263px;font-size:6px;color:#555;">1</div>
<div class="t" style="left:937px;top:263px;font-size:6px;color:#666;">页</div>
<svg style="left:656px;top:251px" width="6" height="6" viewBox="0 0 6 6"><circle cx="3" cy="1.7" r="1.6" fill="#b0b0b0"/><path d="M0 6C0 4 1.2 3.6 3 3.6S6 4 6 6Z" fill="#b0b0b0"/></svg>
<div class="t" style="left:666px;top:250px;font-size:6px;color:#dadada">发票申请管理</div>
<svg style="left:745px;top:252px" width="6" height="5" viewBox="0 0 6 5"><path d="M0 1L3 4L6 1" fill="none" stroke="#666" stroke-width="0.8"/></svg>
<svg style="left:656px;top:273px" width="6" height="6" viewBox="0 0 6 6"><rect x="0.3" y="0.3" width="5.4" height="5.4" fill="#9a9a9a"/><path d="M1.5 3H4.5" stroke="#333" stroke-width="0.7"/></svg>
<div class="t" style="left:666px;top:272px;font-size:6px;color:#dadada">论坛管理</div>
<svg style="left:745px;top:274px" width="6" height="5" viewBox="0 0 6 5"><path d="M0 1L3 4L6 1" fill="none" stroke="#666" stroke-width="0.8"/></svg>
<svg style="left:656px;top:296px" width="6" height="6" viewBox="0 0 6 6"><path d="M0 1H6M0 3H6M0 5H6" stroke="#aaa" stroke-width="1"/></svg>
<div class="t" style="left:666px;top:295px;font-size:6px;color:#dadada">寄件信息管理</div>
<svg style="left:745px;top:297px" width="6" height="5" viewBox="0 0 6 5"><path d="M0 1L3 4L6 1" fill="none" stroke="#666" stroke-width="0.8"/></svg>
<svg style="left:656px;top:318px" width="6" height="6" viewBox="0 0 6 6"><rect x="0.5" y="0.3" width="5" height="5.7" fill="none" stroke="#999" stroke-width="1"/><path d="M2 2.5H4M2 4H4" stroke="#999" stroke-width="0.7"/></svg>
<div class="t" style="left:666px;top:317px;font-size:6px;color:#dadada">快件信息管理</div>
<svg style="left:745px;top:319px" width="6" height="5" viewBox="0 0 6 5"><path d="M0 1L3 4L6 1" fill="none" stroke="#666" stroke-width="0.8"/></svg>
<svg style="left:656px;top:340px" width="6" height="6" viewBox="0 0 6 6"><circle cx="3" cy="2.3" r="2" fill="none" stroke="#999" stroke-width="0.9"/><path d="M3 4.3V6" stroke="#999" stroke-width="0.9"/></svg>
<div class="t" style="left:666px;top:339px;font-size:6px;color:#dadada">公告信息管理</div>
<svg style="left:745px;top:341px" width="6" height="5" viewBox="0 0 6 5"><path d="M0 1L3 4L6 1" fill="none" stroke="#666" stroke-width="0.8"/></svg>
<div class="a" style="left:643px;top:349px;width:581px;height:4px;background:#1a1a1a"></div>
<div class="a" style="left:686px;top:349px;width:20px;height:2px;background:#555"></div>
<div class="a" style="left:646px;top:603px;width:578px;height:347px;background:#f7f7f8"></div>
<div class="a" style="left:646px;top:603px;width:578px;height:14px;background:#202124"></div>
<div class="a" style="left:681px;top:604px;width:96px;height:13px;background:#35363a;border-radius:3px 3px 0 0"></div>
<svg style="left:653px;top:606px" width="8" height="8" viewBox="0 0 8 8"><circle cx="4" cy="4" r="3.3" fill="none" stroke="#ddd" stroke-width="1.2"/><path d="M1 4H7M4 1V7" stroke="#ddd" stroke-width="0.8"/></svg>
<div class="a" style="left:670px;top:607px;width:7px;height:5px;background:#e6e6e6"></div>
<div class="t" style="left:686px;top:606px;font-size:8px;color:#3fb27f;font-weight:bold">V</div>
<div class="t" style="left:695px;top:607px;font-size:5.5px;color:#ccc;">速达物流信息查询</div>
<div class="t" style="left:767px;top:605px;font-size:8px;color:#ddd;">×</div>
<div class="t" style="left:784px;top:604px;font-size:9px;color:#ddd;">+</div>
<div class="t" style="left:1157px;top:604px;font-size:7px;color:#999;">⌄</div>
<div class="a" style="left:1176px;top:609px;width:5px;height:1px;background:#bbb"></div>
<div class="a" style="left:1194px;top:607px;width:5px;height:5px;border:0.8px solid #bbb"></div><div class="a" style="left:1195.5px;top:605.5px;width:5px;height:5px;border-top:0.8px solid #bbb;border-right:0.8px solid #bbb"></div>
<svg style="left:1212px;top:606px" width="6" height="6" viewBox="0 0 6 6"><path d="M0.5 0.5L5.5 5.5M5.5 0.5L0.5 5.5" stroke="#ccc" stroke-width="0.9"/></svg>
<div class="a" style="left:646px;top:617px;width:578px;height:27px;background:#35363a"></div>
<div class="t" style="left:650px;top:617px;font-size:9px;color:#ddd;">←</div>
<div class="t" style="left:663px;top:617px;font-size:9px;color:#777;">→</div>
<div class="t" style="left:676px;top:617px;font-size:9px;color:#ddd;">↻</div>
<div class="a" style="left:689px;top:618px;width:455px;height:11px;border-radius:6px;background:#202124"></div>
<svg style="left:694px;top:620px" width="7" height="7" viewBox="0 0 7 7"><circle cx="3.5" cy="3.5" r="2.8" fill="none" stroke="#aaa" stroke-width="0.8"/></svg>
<div class="t" style="left:703px;top:620px;font-size:6.2px;color:#e8e8e8;">localhost<span style="color:#888">:8080/shudawuliudnxi/admin/dist/index.html#/news</span></div>
<div class="t" style="left:1117px;top:619px;font-size:7px;color:#ccc;">⊶</div>
<div class="t" style="left:1129px;top:618px;font-size:8px;color:#ccc;">☆</div>
<div class="a" style="left:1146px;top:620px;width:6px;height:7px;border:1px solid #ddd;border-left-width:3px"></div>
<div class="a" style="left:1157px;top:619px;width:9px;height:9px;border-radius:5px;background:#ddd"></div>
<div class="t" style="left:1169px;top:620px;font-size:5.5px;color:#ddd;">无痕模式</div>
<div class="a" style="left:1194px;top:617px;width:27px;height:13px;border-radius:7px;border:1px solid #8a3030"></div>
<div class="t" style="left:1199px;top:620px;font-size:5.5px;color:#e06060;">更新 ⋮</div>
<div class="a" style="left:650px;top:634px;width:4px;height:6px;background:#f2c94c"></div>
<div class="t" style="left:657px;top:633px;font-size:6px;color:#ddd;">资料</div>
<div class="a" style="left:676px;top:634px;width:4px;height:6px;background:#f2c94c"></div>
<div class="t" style="left:683px;top:633px;font-size:6px;color:#ddd;">常用</div>
<div class="a" style="left:1192px;top:634px;width:4px;height:6px;background:#f2c94c"></div>
<div class="t" style="left:1198px;top:634px;font-size:5px;color:#ddd;">其他书签</div>
<div class="a" style="left:646px;top:644px;width:578px;height:24px;background:#4a4a4c"></div>
<div class="t" style="left:660px;top:652px;font-size:8px;color:#f2f2f2;font-weight:bold">速达物流信息查询</div>
<div class="t" style="left:1130px;top:652px;font-size:6.5px;color:#eee;">管理员 admin</div>
<div class="t" style="left:1180px;top:652px;font-size:6.5px;color:#eee;">退出登录</div>
<div class="a" style="left:646px;top:668px;width:112px;height:282px;background:#1f1f1f"></div>
<svg style="left:656px;top:676px" width="6" height="6" viewBox="0 0 6 6"><path d="M0 3L3 0.2L6 3V6H4V4H2V6H0Z" fill="#b0b0b0"/></svg>
<div class="t" style="left:665px;top:675px;font-size:6px;color:#dadada">首页</div>
<svg style="left:656px;top:699px" width="6" height="6" viewBox="0 0 6 6"><circle cx="3" cy="1.7" r="1.6" fill="#b0b0b0"/><path d="M0 6C0 4 1.2 3.6 3 3.6S6 4 6 6Z" fill="#b0b0b0"/></svg>
<div class="t" style="left:665px;top:698px;font-size:6px;color:#dadada">个人中心</div>
<svg style="left:745px;top:700px" width="6" height="5" viewBox="0 0 6 5"><path d="M0 1L3 4L6 1" fill="none" stroke="#666" stroke-width="0.8"/></svg>
<svg style="left:656px;top:721px" width="6" height="6" viewBox="0 0 6 6"><rect x="0.5" y="0.5" width="5" height="5.5" fill="#5a5a5a"/></svg>
<div class="t" style="left:665px;top:720px;font-size:6px;color:#dadada">管理员管理</div>
<svg style="left:745px;top:722px" width="6" height="5" viewBox="0 0 6 5"><path d="M0 1L3 4L6 1" fill="none" stroke="#666" stroke-width="0.8"/></svg>
<svg style="left:656px;top:744px" width="6" height="6" viewBox="0 0 6 6"><rect x="0" y="0.5" width="2.5" height="2" fill="#b0b0b0"/><rect x="3.5" y="0.5" width="2.5" height="2" fill="#b0b0b0"/><rect x="0" y="3.5" width="2.5" height="2" fill="#b0b0b0"/><rect x="3.5" y="3.5" width="2.5" height="2" fill="#b0b0b0"/></svg>
<div class="t" style="left:665px;top:743px;font-size:6px;color:#dadada">在线聊天管理</div>
<svg style="left:745px;top:745px" width="6" height="5" viewBox="0 0 6 5"><path d="M0 1L3 4L6 1" fill="none" stroke="#666" stroke-width="0.8"/></svg>
<svg style="left:656px;top:766px" width="6" height="6" viewBox="0 0 6 6"><rect x="0.5" y="0.3" width="5" height="5.7" fill="none" stroke="#999" stroke-width="1"/><path d="M2 2.5H4M2 4H4" stroke="#999" stroke-width="0.7"/></svg>
<div class="t" style="left:665px;top:765px;font-size:6px;color:#dadada">基础数据管理</div>
<svg style="left:745px;top:767px" width="6" height="5" viewBox="0 0 6 5"><path d="M0 1L3 4L6 1" fill="none" stroke="#666" stroke-width="0.8"/></svg>
<svg style="left:656px;top:789px" width="6" height="6" viewBox="0 0 6 6"><circle cx="3" cy="1.7" r="1.6" fill="#b0b0b0"/><path d="M0 6C0 4 1.2 3.6 3 3.6S6 4 6 6Z" fill="#b0b0b0"/></svg>
<div class="t" style="left:665px;top:788px;font-size:6px;color:#dadada">发票申请管理</div>
<svg style="left:745px;top:790px" width="6" height="5" viewBox="0 0 6 5"><path d="M0 1L3 4L6 1" fill="none" stroke="#666" stroke-width="0.8"/></svg>
<svg style="left:656px;top:811px" width="6" height="6" viewBox="0 0 6 6"><rect x="0.3" y="0.3" width="5.4" height="5.4" fill="#9a9a9a"/><path d="M1.5 3H4.5" stroke="#333" stroke-width="0.7"/></svg>
<div class="t" style="left:665px;top:810px;font-size:6px;color:#dadada">论坛管理</div>
<svg style="left:745px;top:812px" width="6" height="5" viewBox="0 0 6 5"><path d="M0 1L3 4L6 1" fill="none" stroke="#666" stroke-width="0.8"/></svg>
<svg style="left:656px;top:834px" width="6" height="6" viewBox="0 0 6 6"><path d="M0 1H6M0 3H6M0 5H6" stroke="#aaa" stroke-width="1"/></svg>
<div class="t" style="left:665px;top:833px;font-size:6px;color:#dadada">寄件信息管理</div>
<svg style="left:745px;top:835px" width="6" height="5" viewBox="0 0 6 5"><path d="M0 1L3 4L6 1" fill="none" stroke="#666" stroke-width="0.8"/></svg>
<svg style="left:656px;top:856px" width="6" height="6" viewBox="0 0 6 6"><rect x="0.5" y="0.3" width="5" height="5.7" fill="none" stroke="#999" stroke-width="1"/><path d="M2 2.5H4M2 4H4" stroke="#999" stroke-width="0.7"/></svg>
<div class="t" style="left:665px;top:855px;font-size:6px;color:#dadada">快件信息管理</div>
<svg style="left:745px;top:857px" width="6" height="5" viewBox="0 0 6 5"><path d="M0 1L3 4L6 1" fill="none" stroke="#666" stroke-width="0.8"/></svg>
<svg style="left:656px;top:879px" width="6" height="6" viewBox="0 0 6 6"><circle cx="3" cy="2.3" r="2" fill="none" stroke="#999" stroke-width="0.9"/><path d="M3 4.3V6" stroke="#999" stroke-width="0.9"/></svg>
<div class="t" style="left:665px;top:878px;font-size:6px;color:#dadada">公告信息管理</div>
<svg style="left:745px;top:880px" width="6" height="5" viewBox="0 0 6 5"><path d="M0 4L3 1L6 4" fill="none" stroke="#666" stroke-width="0.8"/></svg>
<svg style="left:656px;top:922px" width="6" height="6" viewBox="0 0 6 6"><path d="M0 6V3H1.5V6ZM2.3 6V1.5H3.8V6ZM4.5 6V0H6V6Z" fill="#a0a0a0"/></svg>
<div class="t" style="left:665px;top:921px;font-size:6px;color:#dadada">同城急送管理</div>
<svg style="left:745px;top:923px" width="6" height="5" viewBox="0 0 6 5"><path d="M0 1L3 4L6 1" fill="none" stroke="#666" stroke-width="0.8"/></svg>
<svg style="left:656px;top:943px" width="6" height="6" viewBox="0 0 6 6"><circle cx="3" cy="3" r="2.5" fill="none" stroke="#999" stroke-width="0.9"/></svg>
<div class="t" style="left:665px;top:942px;font-size:6px;color:#dadada">用户管理</div>
<svg style="left:745px;top:944px" width="6" height="5" viewBox="0 0 6 5"><path d="M0 1L3 4L6 1" fill="none" stroke="#666" stroke-width="0.8"/></svg>
<div class="t" style="left:662px;top:899px;font-size:6px;color:#d0d0d0">公告信息管理</div>
<div class="a" style="left:759px;top:668px;width:465px;height:282px;background:#f5f5f6"></div>
<div class="a" style="left:768px;top:672px;width:440px;height:278px;background:#fff"></div>
<div class="t" style="left:776px;top:678px;font-size:6.5px;color:#333;font-weight:bold">首页</div>
<div class="t" style="left:791px;top:677px;font-size:7px;color:#d0121b;">❤</div>
<div class="t" style="left:800px;top:678px;font-size:6.5px;color:#bbb;">公告信息</div>
<div class="a" style="left:768px;top:692px;width:440px;height:1px;background:#999"></div>
<div class="t" style="left:776px;top:708px;font-size:6px;color:#666;">公告标题</div>
<div class="a" style="left:803px;top:704px;width:93px;height:17px;border:1px solid #bdbdbd;border-radius:2px"></div>
<div class="t" style="left:808px;top:708px;font-size:6px;color:#ccc;">○ 公告标题</div>
<div class="t" style="left:900px;top:708px;font-size:6px;color:#666;">公告类型</div>
<div class="a" style="left:928px;top:704px;width:86px;height:17px;border:1px solid #bdbdbd;border-radius:2px"></div>
<div class="t" style="left:933px;top:708px;font-size:6px;color:#ccc;">请选择公告类型</div>
<div class="a" style="left:1019px;top:705px;width:35px;height:15px;background:#e04545"></div>
<div class="t" style="left:1026px;top:708px;font-size:6px;color:#fff;">查询 ○</div>
<div class="a" style="left:776px;top:730px;width:35px;height:15px;background:#d0121b;border-radius:2px"></div>
<div class="t" style="left:784px;top:733px;font-size:6.5px;color:#fff;font-weight:bold">+ 新增</div>
<div class="a" style="left:817px;top:730px;width:35px;height:15px;background:#e06060;border-radius:2px"></div>
<div class="t" style="left:824px;top:733px;font-size:6.5px;color:#fff;font-weight:bold">▮ 删除</div>
<div class="a" style="left:776px;top:754px;width:424px;height:20px;background:#f3f3f4"></div>
<div class="a" style="left:776px;top:824px;width:424px;height:49px;background:#f3f3f3"></div>
<div class="a" style="left:776px;top:922px;width:424px;height:28px;background:#f3f3f3"></div>
<div class="a" style="left:796px;top:754px;width:1px;height:196px;background:#f0f0f0"></div>
<div class="a" style="left:816px;top:754px;width:1px;height:196px;background:#f0f0f0"></div>
<div class="a" style="left:877px;top:754px;width:1px;height:196px;background:#f0f0f0"></div>
<div class="a" style="left:938px;top:754px;width:1px;height:196px;background:#f0f0f0"></div>
<div class="a" style="left:1018px;top:754px;width:1px;height:196px;background:#f0f0f0"></div>
<div class="a" style="left:1079px;top:754px;width:1px;height:196px;background:#f0f0f0"></div>
<div class="a" style="left:784px;top:761px;width:6px;height:6px;border:1px solid #ddd;background:#fff"></div>
<div class="t" style="left:801px;top:760px;font-size:6px;color:#444;">索引</div>
<div class="t" style="left:831px;top:760px;font-size:6px;color:#444;">公告标题 ⇕</div>
<div class="t" style="left:892px;top:760px;font-size:6px;color:#444;">公告类型 ⇕</div>
<div class="t" style="left:962px;top:760px;font-size:6px;color:#444;">公告图片 ⇕</div>
<div class="t" style="left:1033px;top:760px;font-size:6px;color:#444;">添加时间 ⇕</div>
<div class="t" style="left:1133px;top:760px;font-size:6px;color:#444;">操作</div>
<div class="a" style="left:783px;top:796px;width:7px;height:7px;border:1px solid #e6e6e6;background:#fff"></div>
<div class="t" style="left:801px;top:796px;font-size:6.5px;color:#ef8f96;">1</div>
<div class="t" style="left:834px;top:796px;font-size:5.6px;color:#ef8f96;">公告标题5</div>
<div class="t" style="left:895px;top:796px;font-size:5.6px;color:#ef8f96;">公告类型2</div>
<div class="t" style="left:1022px;top:791px;font-size:6.3px;color:#ef8f96;">2022-04-05 19:49:2</div>
<div class="t" style="left:1046px;top:800px;font-size:6.3px;color:#ef8f96;">4</div>
<div class="t" style="left:1098px;top:795px;font-size:5.5px;color:#6a6a6a;">▯ 详情</div>
<div class="a" style="left:1093px;top:804px;width:29px;height:1px;background:#e88a95"></div>
<div class="t" style="left:1130px;top:795px;font-size:5.5px;color:#6a6a6a;">∠ 修改</div>
<div class="a" style="left:1125px;top:804px;width:29px;height:1px;background:#e88a95"></div>
<div class="t" style="left:1161px;top:795px;font-size:5.5px;color:#6a6a6a;">▯ 删除</div>
<div class="a" style="left:1156px;top:804px;width:29px;height:1px;background:#e88a95"></div>
<div class="a" style="left:783px;top:845px;width:7px;height:7px;border:1px solid #e6e6e6;background:#fff"></div>
<div class="t" style="left:801px;top:845px;font-size:6.5px;color:#86a3dc;">2</div>
<div class="t" style="left:834px;top:845px;font-size:5.6px;color:#86a3dc;">公告标题4</div>
<div class="t" style="left:895px;top:845px;font-size:5.6px;color:#86a3dc;">公告类型3</div>
<div class="t" style="left:1022px;top:840px;font-size:6.3px;color:#86a3dc;">2022-04-05 19:49:2</div>
<div class="t" style="left:1046px;top:849px;font-size:6.3px;color:#86a3dc;">4</div>
<div class="a" style="left:1093px;top:839px;width:29px;height:15px;background:#fff"></div>
<div class="t" style="left:1098px;top:844px;font-size:5.5px;color:#6a6a6a;">▯ 详情</div>
<div class="a" style="left:1093px;top:853px;width:29px;height:1px;background:#e88a95"></div>
<div class="a" style="left:1125px;top:839px;width:29px;height:15px;background:#fff"></div>
<div class="t" style="left:1130px;top:844px;font-size:5.5px;color:#6a6a6a;">∠ 修改</div>
<div class="a" style="left:1125px;top:853px;width:29px;height:1px;background:#e88a95"></div>
<div class="a" style="left:1156px;top:839px;width:29px;height:15px;background:#fff"></div>
<div class="t" style="left:1161px;top:844px;font-size:5.5px;color:#6a6a6a;">▯ 删除</div>
<div class="a" style="left:1156px;top:853px;width:29px;height:1px;background:#e88a95"></div>
<div class="a" style="left:783px;top:894px;width:7px;height:7px;border:1px solid #e6e6e6;background:#fff"></div>
<div class="t" style="left:801px;top:894px;font-size:6.5px;color:#ef8f96;">3</div>
<div class="t" style="left:834px;top:894px;font-size:5.6px;color:#ef8f96;">公告标题3</div>
<div class="t" style="left:895px;top:894px;font-size:5.6px;color:#ef8f96;">公告类型1</div>
<div class="t" style="left:1022px;top:889px;font-size:6.3px;color:#ef8f96;">2022-04-05 19:49:2</div>
<div class="t" style="left:1046px;top:898px;font-size:6.3px;color:#ef8f96;">4</div>
<div class="t" style="left:1098px;top:893px;font-size:5.5px;color:#6a6a6a;">▯ 详情</div>
<div class="a" style="left:1093px;top:902px;width:29px;height:1px;background:#e88a95"></div>
<div class="t" style="left:1130px;top:893px;font-size:5.5px;color:#6a6a6a;">∠ 修改</div>
<div class="a" style="left:1125px;top:902px;width:29px;height:1px;background:#e88a95"></div>
<div class="t" style="left:1161px;top:893px;font-size:5.5px;color:#6a6a6a;">▯ 删除</div>
<div class="a" style="left:1156px;top:902px;width:29px;height:1px;background:#e88a95"></div>
<div class="a" style="left:783px;top:943px;width:7px;height:7px;border:1px solid #e6e6e6;background:#fff"></div>
<div class="t" style="left:801px;top:943px;font-size:6.5px;color:#86a3dc;">4</div>
<div class="t" style="left:834px;top:943px;font-size:5.6px;color:#86a3dc;">公告标题2</div>
<div class="t" style="left:895px;top:943px;font-size:5.6px;color:#86a3dc;">公告类型2</div>
<div class="t" style="left:1022px;top:938px;font-size:6.3px;color:#86a3dc;">2022-04-05 19:49:2</div>
<div class="t" style="left:1046px;top:947px;font-size:6.3px;color:#86a3dc;">4</div>
<div class="a" style="left:1093px;top:937px;width:29px;height:15px;background:#fff"></div>
<div class="t" style="left:1098px;top:942px;font-size:5.5px;color:#6a6a6a;">▯ 详情</div>
<div class="a" style="left:1093px;top:951px;width:29px;height:1px;background:#e88a95"></div>
<div class="a" style="left:1125px;top:937px;width:29px;height:15px;background:#fff"></div>
<div class="t" style="left:1130px;top:942px;font-size:5.5px;color:#6a6a6a;">∠ 修改</div>
<div class="a" style="left:1125px;top:951px;width:29px;height:1px;background:#e88a95"></div>
<div class="a" style="left:1156px;top:937px;width:29px;height:15px;background:#fff"></div>
<div class="t" style="left:1161px;top:942px;font-size:5.5px;color:#6a6a6a;">▯ 删除</div>
<div class="a" style="left:1156px;top:951px;width:29px;height:1px;background:#e88a95"></div>
<svg style="left:958px;top:778px" width="41" height="41" viewBox="0 0 41 41"><defs><radialGradient id="g1" cx="0.4" cy="0.3" r="0.7"><stop offset="0" stop-color="#c8d8ee"/><stop offset="0.35" stop-color="#3a6fd0"/><stop offset="1" stop-color="#0a1e5a"/></radialGradient><linearGradient id="g0" x1="0" y1="0" x2="1" y2="1"><stop offset="0" stop-color="#0a1a50"/><stop offset="0.6" stop-color="#1d4cb0"/><stop offset="1" stop-color="#06102e"/></linearGradient></defs><rect width="41" height="41" fill="url(#g0)"/><circle cx="15" cy="20" r="15" fill="url(#g1)"/><path d="M14 6C20 8 22 14 19 22C17 27 16 30 14 33" stroke="#9aa8c0" stroke-width="2.5" fill="none" opacity="0.8"/><path d="M22 0C32 10 36 24 38 41M28 0C36 8 40 16 41 22" stroke="#b8d4f0" stroke-width="1.5" fill="none"/><path d="M0 36C14 30 28 34 41 41H0Z" fill="#1e58c8" opacity="0.7"/></svg>
<svg style="left:958px;top:827px" width="41" height="41" viewBox="0 0 41 41"><rect width="41" height="41" fill="#fff"/><path d="M3 17L34 8L39 27L8 36Z" fill="#f0f0f0"/><path d="M8 36L39 27L39 29L8 38.5Z" fill="#bbb"/><path d="M3 17L8 36L8 38.5L3 19Z" fill="#999"/><text x="6" y="29" font-size="12" font-weight="bold" fill="#111" transform="rotate(16 20 22)" font-family="Liberation Sans" letter-spacing="-0.8">News</text></svg>
<svg style="left:958px;top:876px" width="41" height="41" viewBox="0 0 41 41"><rect width="41" height="41" fill="#fff"/><path d="M24 8L28 4L32 6L31 12L34 10L36 14L32 22L34 30H24L25 20Z" fill="#c8c8c8"/><circle cx="27" cy="6" r="3" fill="#d8d8d8"/><ellipse cx="30" cy="33" rx="9" ry="2" fill="#e0e0e0"/><text x="6" y="35" font-size="11" font-weight="bold" fill="#e8901a" font-family="Liberation Sans" letter-spacing="-1.2" transform="skewX(-5)">NEWS</text></svg>
<svg style="left:958px;top:925px" width="41" height="23" viewBox="0 0 41 23"><rect width="41" height="23" fill="#dcdfe2"/><path d="M9 7L12 4L15 6L20 3L25 6L28 4L31 7L33 12V23H7V12Z" fill="#f2c830"/><rect x="11" y="9" width="18" height="14" rx="2" fill="#1d6fc0"/><path d="M14 12H18M14 15H18M22 12H26M22 15H26M14 19H26" stroke="#fff" stroke-width="1.3"/></svg>
<div class="a" style="left:1218px;top:668px;width:3px;height:202px;background:#c4c4c4"></div>
<div class="a" style="left:643px;top:947px;width:581px;height:4px;background:#1a1a1a"></div>
<div class="a" style="left:686px;top:947px;width:20px;height:2px;background:#555"></div></div>
<div id="rside"><div class="a" style="left:1832px;top:199px;width:23px;height:778px;background:#e8e9ed"></div>
<div class="a" style="left:1832px;top:199px;width:23px;height:28px;background:#f1f2f5"></div>
<svg style="left:1835px;top:205px" width="15" height="18" viewBox="0 0 15 18"><rect width="15" height="18" rx="2.5" fill="#b9bdc7"/><path d="M3 3H12L7.5 8Z" fill="#fff"/><path d="M2 11H13V15H2Z" fill="#fff"/><path d="M5 11V13M7.5 11V13M10 11V13" stroke="#b9bdc7" stroke-width="1"/></svg>
<div class="a" style="left:1833px;top:230px;width:20px;height:22px;border-radius:6px;background:#cfd1d7"></div>
<svg style="left:1838px;top:237px" width="10" height="6" viewBox="0 0 10 6"><path d="M0 6H10L5 0Z" fill="#8d919c"/></svg>
<div class="a" style="left:1833px;top:691px;width:20px;height:54px;border-radius:8px;background:#d3d5da"></div>
<div class="a" style="left:1833px;top:867px;width:20px;height:22px;border-radius:6px;background:#cfd1d7"></div>
<svg style="left:1838px;top:875px" width="10" height="6" viewBox="0 0 10 6"><path d="M0 0H10L5 6Z" fill="#8d919c"/></svg>
<svg style="left:1837px;top:897px" width="12" height="13" viewBox="0 0 12 13"><path d="M1 6H11L6 1ZM1 12H11L6 7Z" fill="#8d919c"/></svg>
<svg style="left:1837px;top:927px" width="11" height="11" viewBox="0 0 11 11"><rect x="1" y="1" width="9" height="9" rx="1.5" fill="none" stroke="#8d919c" stroke-width="1.3"/></svg>
<svg style="left:1837px;top:953px" width="12" height="13" viewBox="0 0 12 13"><path d="M1 1H11L6 6ZM1 7H11L6 12Z" fill="#8d919c"/></svg>
<svg style="left:1840px;top:762px" width="13" height="20" viewBox="0 0 13 20"><path d="M1 1V16L4.5 12.5L7 18.5L9.5 17.5L7 11.5H12Z" fill="#fff" stroke="#000" stroke-width="1.1" stroke-linejoin="round"/></svg>
<div class="a" style="left:1855px;top:199px;width:65px;height:778px;background:#f5f6f8"></div>
<div class="a" style="left:1872px;top:214px;width:30px;height:1px;background:#c9cace"></div>
<div class="a" style="left:1872px;top:219px;width:30px;height:1px;background:#c9cace"></div>
<svg style="left:1875px;top:253px" width="24" height="23" viewBox="0 0 24 23"><path d="M19.5 1L22.5 4L11 15.5L8 12.5Z" fill="none" stroke="#2f3440" stroke-width="1.6" stroke-linejoin="round"/><path d="M8 12.5C4 12.5 2.5 16 1.5 21.5H9C10.5 19 11.5 17 11 15.5" fill="none" stroke="#2f3440" stroke-width="1.6"/><path d="M1 21.5H22" stroke="#2f3440" stroke-width="1.6"/></svg>
<svg style="left:1879px;top:307px" width="20" height="25" viewBox="0 0 20 25"><path d="M1 1V20L6 15.5L9.5 23L12.5 21.5L9 14.5H16Z" fill="none" stroke="#2f3440" stroke-width="1.7" stroke-linejoin="round"/></svg>
<svg style="left:1874px;top:361px" width="26" height="22" viewBox="0 0 26 22"><path d="M8 5H25M1 17H15M22 17H25" stroke="#9da1ab" stroke-width="1.4"/><circle cx="4.5" cy="5" r="3.3" fill="#f3f4f7" stroke="#9da1ab" stroke-width="1.4"/><circle cx="18.5" cy="17" r="3.3" fill="#f3f4f7" stroke="#9da1ab" stroke-width="1.4"/></svg>
<svg style="left:1874px;top:416px" width="24" height="24" viewBox="0 0 24 24"><circle cx="12" cy="12" r="10.8" fill="none" stroke="#2f3440" stroke-width="1.6"/><path d="M8.5 9A3.5 3.5 0 1 1 13 12.3C12 12.8 12 13.5 12 15" fill="none" stroke="#2f3440" stroke-width="1.6"/><circle cx="12" cy="18" r="1" fill="#2f3440"/></svg>
<svg style="left:1875px;top:470px" width="25" height="24" viewBox="0 0 25 24"><path d="M1.5 8.5C1.5 4 2.5 1.2 5 1.2H19.5C22 1.2 23 4 23 8.5" fill="none" stroke="#2f3440" stroke-width="1.6"/><path d="M2.5 9V21.5H8.5" fill="none" stroke="#2f3440" stroke-width="1.6"/><path d="M2 8.5C2 12 5.8 12 5.8 8.5C5.8 12 9.5 12 9.5 8.5V7" fill="none" stroke="#2f3440" stroke-width="1.5"/><path d="M18.5 21.5C16 18 16.5 12.5 19 10C21.5 12.5 21.5 18 18.5 21.5ZM16.8 22C13 22 11 18.5 12 14.5C15 15.5 16.8 18.5 16.8 22ZM20.2 22C24 22 25 18.5 24 14.5C21.5 15.5 20.2 18.5 20.2 22Z" fill="none" stroke="#2f3440" stroke-width="1.4" stroke-linejoin="round"/></svg>
<svg style="left:1876px;top:523px" width="22" height="25" viewBox="0 0 22 25"><path d="M7.5 19.5C4 18 1 14.5 1 10.5A10 10 0 0 1 21 10.5C21 14.5 18 18 14.5 19.5V23.5H7.5Z" fill="none" stroke="#2f3440" stroke-width="1.6" stroke-linejoin="round"/><path d="M12 4.5L7 11.5H11L9.5 17L15 9.5H11Z" fill="none" stroke="#2f3440" stroke-width="1.4" stroke-linejoin="round"/></svg>
<div class="a" style="left:1855px;top:909px;width:65px;height:1px;background:#e3e4e7"></div>
<svg style="left:1874px;top:944px" width="26" height="10" viewBox="0 0 26 10"><g fill="none" stroke="#2f3440" stroke-width="1.5"><circle cx="4" cy="5" r="2.8"/><circle cx="13" cy="5" r="2.8"/><circle cx="22" cy="5" r="2.8"/></g></svg>
<div class="a" style="left:1906px;top:220px;width:16px;height:86px;border-radius:5px 0 0 5px;background:#4b505c"></div>
<div class="a" style="left:1912px;top:230px;width:6px;height:72px;background:repeating-linear-gradient(#3b3f4a 0 1.5px,transparent 1.5px 3px),linear-gradient(#2e3340 0%,#2e3340 28%,#d8c85a 30%,#b8d070 60%,#55c8a8 100%)"></div>
<div class="a" style="left:1908px;top:912px;width:6px;height:108px;background:linear-gradient(90deg,rgba(0,0,0,0),rgba(0,0,0,0.08))"></div>
<div class="a" style="left:1914px;top:912px;width:6px;height:108px;background:#f3c52e"></div>
<div class="a" style="left:0;top:977px;width:1914px;height:43px;background:#f4f6f8;border-top:1px solid #e9eaed"></div>
<div class="t" style="left:14px;top:993px;font-size:18.5px;color:#3a3f4b;">页面: 31/39</div>
<div class="a" style="left:118px;top:988px;width:1px;height:22px;background:#e3e4e7"></div>
<div class="t" style="left:132px;top:993px;font-size:18.5px;color:#3a3f4b;">字数: 15410</div>
<div class="a" style="left:240px;top:981px;width:111px;height:36px;background:#edf1f8"></div>
<svg style="left:245px;top:988px" width="24" height="23" viewBox="0 0 24 23"><path d="M1 1H23V18H14L12 21L10 18H1Z" fill="none" stroke="#2f3440" stroke-width="1.6" stroke-linejoin="round"/><path d="M6 9L10 13L18 5" fill="none" stroke="#2f3440" stroke-width="1.6"/></svg>
<div class="t" style="left:273px;top:993px;font-size:18.5px;color:#3a3f4b;letter-spacing:-1px;">拼写检查</div>
<svg style="left:351px;top:997px" width="8" height="5" viewBox="0 0 8 5"><path d="M0 0H8L4 4.5Z" fill="#7a7f8c"/></svg>
<div class="a" style="left:367px;top:988px;width:1px;height:22px;background:#e3e4e7"></div>
<svg style="left:380px;top:988px" width="24" height="23" viewBox="0 0 24 23"><path d="M1 1H23V18H14L12 21L10 18H1Z" fill="none" stroke="#2f3440" stroke-width="1.6" stroke-linejoin="round"/><path d="M8 6L16 13M16 6L8 13" stroke="#2f3440" stroke-width="1.6"/></svg>
<div class="t" style="left:409px;top:993px;font-size:18.5px;color:#3a3f4b;letter-spacing:-1px;">文档校对</div>
<div class="t" style="left:509px;top:993px;font-size:18.5px;color:#3a3f4b;letter-spacing:-1px;">兼容模式</div>
<div class="a" style="left:590px;top:988px;width:1px;height:22px;background:#e3e4e7"></div>
<div class="t" style="left:606px;top:990px;font-size:23px;color:#2f3440;font-family:'Liberation Serif',serif">T</div>
<div class="t" style="left:620px;top:993px;font-size:16px;color:#3a3f4b;">?</div>
<div class="t" style="left:636px;top:993px;font-size:18.5px;color:#3a3f4b;letter-spacing:-1px;">缺失字体</div>
<svg style="left:1204px;top:987px" width="27" height="22" viewBox="0 0 27 22"><path d="M1.5 14C5 8 9 6.5 13.5 6.5S22 8 25.5 14C22 19.5 18 21 13.5 21S5 19.5 1.5 14Z" fill="none" stroke="#2f3440" stroke-width="1.6"/><circle cx="13.5" cy="14" r="3.8" fill="none" stroke="#2f3440" stroke-width="1.6"/><path d="M13.5 0.5V3.5M5 2.5L6.5 5M22 2.5L20.5 5" stroke="#2f3440" stroke-width="1.5"/></svg>
<div class="a" style="left:1246px;top:988px;width:1px;height:22px;background:#e3e4e7"></div>
<div class="a" style="left:1257px;top:981px;width:35px;height:36px;border-radius:3px;background:#dde0e5"></div>
<svg style="left:1264px;top:988px" width="22" height="23" viewBox="0 0 22 23"><path d="M1 1H15L21 7V22H1Z" fill="#eceef2" stroke="#2f3440" stroke-width="1.6"/><path d="M5.5 10H16.5M5.5 15H16.5" stroke="#2f3440" stroke-width="1.6"/></svg>
<svg style="left:1303px;top:989px" width="23" height="21" viewBox="0 0 23 21"><path d="M7 1.5H22M10 7.5H22M10 13.5H22M7 19.5H22" stroke="#2f3440" stroke-width="1.6"/><path d="M1 1.5H3M4 7.5H6M4 13.5H6M1 19.5H3" stroke="#2f3440" stroke-width="1.6"/></svg>
<svg style="left:1340px;top:988px" width="24" height="23" viewBox="0 0 24 23"><path d="M12 3.5C8.5 1.5 4.5 1 1 1.5V19C4.5 18.5 8.5 19 12 21C15.5 19 19.5 18.5 23 19V1.5C19.5 1 15.5 1.5 12 3.5ZM12 3.5V21" fill="none" stroke="#2f3440" stroke-width="1.6" stroke-linejoin="round"/></svg>
<svg style="left:1379px;top:988px" width="24" height="24" viewBox="0 0 24 24"><circle cx="12" cy="12" r="10.8" fill="none" stroke="#2f3440" stroke-width="1.6"/><ellipse cx="12" cy="12" rx="4.5" ry="10.8" fill="none" stroke="#2f3440" stroke-width="1.6"/><path d="M1.5 8.5H22.5M1.5 15.5H22.5" stroke="#2f3440" stroke-width="1.6"/></svg>
<svg style="left:1418px;top:987px" width="26" height="24" viewBox="0 0 26 24"><path d="M18 1.5L23.5 7L9 21.5H3.5V16Z" fill="none" stroke="#2f3440" stroke-width="1.6" stroke-linejoin="round"/><path d="M15 4.5L20.5 10M1 23H25" stroke="#2f3440" stroke-width="1.6"/></svg>
<div class="a" style="left:1461px;top:988px;width:1px;height:22px;background:#e3e4e7"></div>
<svg style="left:1477px;top:988px" width="24" height="23" viewBox="0 0 24 23"><path d="M1 6V1H6M18 1H23V6M23 17V22H18M6 22H1V17" fill="none" stroke="#2f3440" stroke-width="1.6"/><rect x="6" y="6" width="12" height="11" fill="none" stroke="#2f3440" stroke-width="1.6"/></svg>
<div class="t" style="left:1511px;top:989px;font-size:20px;color:#3a3f4b;">70%</div>
<svg style="left:1555px;top:997px" width="8" height="5" viewBox="0 0 8 5"><path d="M0 0H8L4 4.5Z" fill="#7a7f8c"/></svg>
<div class="a" style="left:1582px;top:998px;width:16px;height:3px;background:#2f3440"></div>
<div class="a" style="left:1616px;top:999px;width:206px;height:1px;background:#b8bbc2"></div>
<div class="a" style="left:1718px;top:995px;width:1px;height:8px;background:#c8cbd1"></div>
<svg style="left:1673px;top:989px" width="20" height="20" viewBox="0 0 20 20"><circle cx="10" cy="10" r="8.8" fill="#f2f3f5" stroke="#2f3440" stroke-width="1.4"/></svg>
<svg style="left:1840px;top:992px" width="16" height="16" viewBox="0 0 16 16"><path d="M8 0V16M0 8H16" stroke="#2f3440" stroke-width="2.6"/></svg>
<svg style="left:1874px;top:988px" width="23" height="22" viewBox="0 0 23 22"><path d="M2 7V1.5H7.5M1.5 1.5L8 8M21 7V1.5H15.5M21.5 1.5L15 8M2 15V20.5H7.5M1.5 20.5L8 14M21 15V20.5H15.5M21.5 20.5L15 14" fill="none" stroke="#2f3440" stroke-width="1.6"/></svg></div>
<div id="tb"><div class="a" style="left:0;top:1020px;width:1920px;height:60px;background:linear-gradient(90deg,#232b38 0%,#283444 46%,#27303c 62%,#212328 76%,#1f1f21 100%)"></div>
<svg style="left:24px;top:1038px" width="25" height="25" viewBox="0 0 25 25"><path d="M0 3.5L10 2V11.5H0ZM11.5 1.8L25 0V11.5H11.5ZM0 13H10V22.5L0 21ZM11.5 13H25V25L11.5 23Z" fill="#fff"/></svg>
<svg style="left:95px;top:1034px" width="33" height="33" viewBox="0 0 33 33"><path d="M5 0H13.5L16 2L18.5 0H27.5L32.5 5V14L30.5 16.3L32.5 18.5V27.5L27.5 32.5H19L17 30.5L15 32.5H5L0 27.5V18.5L2 16.3L0 14V5Z" fill="#fff"/><path d="M16.1 16.3C12 13 11.5 6 16 0M16.1 16.3C20 12 26 12 32.5 15.5M16.1 16.3C20.5 20 21 26 17 32.5M16.1 16.3C12 21 6 21 0 16.3" fill="none" stroke="#283444" stroke-width="2"/></svg>
<div class="a" style="left:150px;top:1028px;width:205px;height:43px;background:#ececec"></div>
<svg style="left:158px;top:1037px" width="23" height="24" viewBox="0 0 23 24"><path d="M20 14H6C6.5 18 9 20 12 20C14.5 20 16 19 17 17.5H21C19.5 21 16 23 12 23C6.5 23 2.5 19 2.5 13S6.5 3 12 3C17.5 3 21 7 20.5 14ZM6.5 11H16.5C16 8 14.5 6 12 6S7 8 6.5 11Z" fill="#1f8ee8"/><path d="M4 22C1 19 3 9 12 4C18 1 22 1 22.5 3C23 5 21 8 18 10" fill="none" stroke="#1f8ee8" stroke-width="1.5"/></svg>
<svg style="left:186px;top:1046px" width="7" height="5" viewBox="0 0 7 5"><path d="M0 5H7L3.5 0Z" fill="#999"/></svg>
<div class="t" style="left:200px;top:1039px;font-size:17px;color:#222;letter-spacing:-2px;">考研需要考哪些科目</div>
<div class="a" style="left:355px;top:1028px;width:70px;height:43px;background:#2d84f0"></div>
<div class="t" style="left:360px;top:1041px;font-size:15px;color:#fff;">搜索一下</div>
<div class="a" style="left:436px;top:1030px;width:1px;height:38px;background:#4a5160"></div>
<svg style="left:476px;top:1030px" width="38" height="38" viewBox="0 0 38 38"><defs><linearGradient id="ie" x1="0" y1="0" x2="0" y2="1"><stop offset="0" stop-color="#5fd0f8"/><stop offset="1" stop-color="#1a78d8"/></linearGradient></defs><path d="M31 22H12C12.5 27 15.5 29.5 19.5 29.5C22.5 29.5 24.5 28 25.5 26H31.5C29.5 31.5 25 34.5 19.5 34.5C12 34.5 6.5 29 6.5 21S12 7.5 19.5 7.5C27 7.5 32 13 31 22ZM12.5 17.5H25.5C25 13.5 22.5 11.5 19.5 11.5S13 13.5 12.5 17.5Z" fill="url(#ie)"/><path d="M8 34C2 30 5 17 17 9C27 2 35 2 36 5C37 8 34 13 29 16" fill="none" stroke="#f2c230" stroke-width="2.2"/></svg>
<svg style="left:552px;top:1031px" width="36" height="36" viewBox="0 0 36 36"><circle cx="18" cy="19" r="15" fill="#4cb82c" stroke="#fff" stroke-width="1.5"/><path d="M28 21H12.5C13 25 15.5 27 18.5 27C21 27 22.5 26 23.5 24.5H28C26.5 28.5 23 31 18.5 31C12.5 31 8 26.5 8 19.5S12.5 8 18.5 8C24.5 8 28.5 12.5 28 21ZM13 17H23.5C23 13.5 21 11.5 18.5 11.5S13.5 13.5 13 17Z" fill="#fff"/><path d="M7 33C12 25 20 10 31 6" fill="none" stroke="#8ad04a" stroke-width="1.5"/></svg>
<svg style="left:628px;top:1036px" width="34" height="28" viewBox="0 0 34 28"><path d="M0 2A2 2 0 0 1 2 0H11L14 3H32A2 2 0 0 1 34 5V26A2 2 0 0 1 32 28H2A2 2 0 0 1 0 26Z" fill="#f0c040"/><rect x="0" y="6" width="34" height="22" rx="1.5" fill="#fbd86a"/><path d="M9 28V17H25V28H20V21H14V28Z" fill="#2d8be0"/></svg>
<div class="a" style="left:615px;top:1077px;width:61px;height:3px;background:#7ab8ec"></div>
<svg style="left:702px;top:1032px" width="36" height="36" viewBox="0 0 36 36"><circle cx="18" cy="18" r="17.5" fill="#f07a10"/><circle cx="18" cy="18" r="15" fill="#e86a0a"/><path d="M8 8L11 14H25L28 8L24 12H12Z" fill="#fff"/><ellipse cx="18" cy="18" rx="10" ry="7" fill="#111"/><ellipse cx="13.5" cy="17" rx="3.5" ry="2" fill="#f0f0f0"/><ellipse cx="22.5" cy="17" rx="3.5" ry="2" fill="#f0f0f0"/><path d="M11 24C13 28 23 28 25 24V30H11Z" fill="#111"/><rect x="16.5" y="27" width="3" height="3" fill="#fff"/></svg>
<div class="a" style="left:690px;top:1077px;width:61px;height:3px;background:#7ab8ec"></div>
<div class="a" style="left:759px;top:1020px;width:73px;height:60px;background:#4b5564"></div>
<svg style="left:776px;top:1036px" width="38" height="28" viewBox="0 0 38 28"><path d="M0.5 0.5H15.5L12.5 8H8L12.5 19.5L9.5 27Z" fill="#f01c22"/><path d="M26 0.5H37L30 27.5H21L24 16L28.5 18L31.5 6.5H24Z" fill="#f4301a"/><path d="M19 0.5H27.5L17.5 27.5H9Z" fill="#ff6424"/></svg>
<div class="a" style="left:759px;top:1077px;width:73px;height:3px;background:#7ab8ec"></div>
<svg style="left:980px;top:1035px" width="36" height="33" viewBox="0 0 36 33"><circle cx="24" cy="9" r="7" fill="#f5c13a"/><path d="M7 25A6 6 0 0 1 7 13A9 9 0 0 1 24 12A6.5 6.5 0 0 1 25 25Z" fill="#e8ecf2"/><circle cx="30" cy="29" r="4" fill="#e8283a"/></svg>
<div class="t" style="left:1050px;top:1027px;font-size:18.5px;color:#fff;">19%</div>
<div class="t" style="left:1027px;top:1040px;font-size:20px;color:#fff;">22°C&nbsp;&nbsp;多云</div>
<div class="t" style="left:1022px;top:1051px;font-size:18.5px;color:#fff;">CPU利用率</div>
<svg style="left:1153px;top:1038px" width="22" height="25" viewBox="0 0 22 25"><rect x="5" y="0" width="12" height="8" rx="1" fill="#d8dde4"/><rect x="7.5" y="2" width="2.5" height="3" fill="#555"/><rect x="12" y="2" width="2.5" height="3" fill="#555"/><path d="M1 8H21V21A4 4 0 0 1 17 25H5A4 4 0 0 1 1 21Z" fill="#2f86d8"/><path d="M11 11V21M8 14V17L11 18M14 13V16L11 17" fill="none" stroke="#9fd0ff" stroke-width="1"/></svg>
<svg style="left:1188px;top:1037px" width="25" height="25" viewBox="0 0 25 25"><circle cx="12.5" cy="12.5" r="12.5" fill="#e8101a"/><path d="M5 6L7.5 10H17.5L20 6L17 8.5H8Z" fill="#fff"/><ellipse cx="12.5" cy="13" rx="7.5" ry="5" fill="#111"/><ellipse cx="9.5" cy="12.5" rx="2.5" ry="1.5" fill="#eee"/><ellipse cx="15.5" cy="12.5" rx="2.5" ry="1.5" fill="#eee"/><rect x="11" y="19" width="3" height="3" fill="#ddd"/></svg>
<svg style="left:1224px;top:1038px" width="25" height="25" viewBox="0 0 25 25"><rect width="24" height="24" rx="3" fill="#2f8ee8"/><path d="M9 5V15C9 18 11 19.5 14 19.5M5 9H16M16 5C18 6 19 8 18.5 10" fill="none" stroke="#fff" stroke-width="2.6"/><rect x="13" y="13" width="11" height="11" rx="2" fill="#20b040"/><path d="M15.5 18.5L18 21L22 16" fill="none" stroke="#fff" stroke-width="1.6"/></svg>
<svg style="left:1260px;top:1038px" width="25" height="25" viewBox="0 0 25 25"><rect width="24" height="24" rx="3" fill="#2f8ee8"/><path d="M9 5V15C9 18 11 19.5 14 19.5M5 9H16M16 5C18 6 19 8 18.5 10" fill="none" stroke="#fff" stroke-width="2.6"/><rect x="13" y="13" width="11" height="11" rx="2" fill="#20b040"/><path d="M15.5 18.5L18 21L22 16" fill="none" stroke="#fff" stroke-width="1.6"/></svg>
<svg style="left:1296px;top:1038px" width="25" height="25" viewBox="0 0 25 25"><path d="M12.5 1L23.5 5V12C23.5 18 18.5 22.5 12.5 24C6.5 22.5 1.5 18 1.5 12V5Z" fill="#2f8ee8"/><path d="M12.5 4L20.5 7V12C20.5 16.5 17 19.5 12.5 21C8 19.5 4.5 16.5 4.5 12V7Z" fill="#fff"/><path d="M7 10L12.5 16L18 10" fill="none" stroke="#2f8ee8" stroke-width="2.5"/></svg>
<svg style="left:1335px;top:1040px" width="23" height="21" viewBox="0 0 23 21"><path d="M1 10C7 2 16 0 22 3M5 13C10 8 16 6.5 21 8M9 16C13 13 17 12 20.5 13M13 18.5C15 17 17 17 19 17.5" fill="none" stroke="#fff" stroke-width="1.3"/><circle cx="20" cy="19" r="1.5" fill="#fff"/></svg>
<svg style="left:1369px;top:1038px" width="22" height="24" viewBox="0 0 22 24"><path d="M11 1C6 1 4 5 4 9V15L1 19H21L18 15V9C18 5 16 1 11 1Z" fill="#fff"/><path d="M8 21A3 3 0 0 0 14 21Z" fill="#fff"/></svg>
<svg style="left:1404px;top:1038px" width="24" height="24" viewBox="0 0 24 24"><rect width="24" height="24" rx="2" fill="#2a3038"/><path d="M4 12C7 6 15 5 20 9C15 8 10 9 8 13C10 16 15 17 20 15C15 19 7 18 4 12Z" fill="#76b900"/><circle cx="12" cy="12" r="2.5" fill="#76b900"/></svg>
<svg style="left:1441px;top:1039px" width="20" height="24" viewBox="0 0 20 24"><ellipse cx="10" cy="9" rx="6.5" ry="8" fill="#111"/><ellipse cx="10" cy="16" rx="7" ry="7" fill="#111"/><ellipse cx="10" cy="16" rx="4.5" ry="5.5" fill="#fff"/><path d="M3 13H17L15 16H5Z" fill="#e82020"/><ellipse cx="10" cy="10" rx="3" ry="1.5" fill="#f5b020"/><circle cx="8" cy="6" r="1.2" fill="#fff"/><circle cx="12" cy="6" r="1.2" fill="#fff"/><ellipse cx="5" cy="22.5" rx="3.5" ry="1.5" fill="#f5b020"/><ellipse cx="15" cy="22.5" rx="3.5" ry="1.5" fill="#f5b020"/></svg>
<svg style="left:1475px;top:1038px" width="26" height="22" viewBox="0 0 26 22"><path d="M3 1V6M7 1V6M1 6H9V9C9 11 7 12 5 12V15H9" fill="none" stroke="#fff" stroke-width="1.4"/><rect x="8" y="9" width="16" height="11" fill="none" stroke="#fff" stroke-width="1.4"/><rect x="10" y="11" width="12" height="7" fill="#fff"/><rect x="24" y="12.5" width="2" height="4" fill="#fff"/></svg>
<svg style="left:1514px;top:1038px" width="20" height="25" viewBox="0 0 20 25"><ellipse cx="10" cy="12.5" rx="9.5" ry="12.5" fill="#1e82e8"/><path d="M6 8L14 16L10 20V5L14 9L6 17" fill="none" stroke="#fff" stroke-width="1.5"/></svg>
<svg style="left:1552px;top:1037px" width="20" height="26" viewBox="0 0 20 26"><rect x="4.5" y="1" width="8" height="6" fill="none" stroke="#fff" stroke-width="1.2"/><path d="M2 7H15V25H2Z" fill="none" stroke="#fff" stroke-width="1.3"/><path d="M12 22L14.5 24.5L19.5 18.5" fill="none" stroke="#bbb" stroke-width="1"/></svg>
<svg style="left:1583px;top:1038px" width="25" height="25" viewBox="0 0 25 25"><circle cx="12.5" cy="12.5" r="12" fill="#f2d320"/><path d="M3 16C6 20 12 22 17 19C20 17 22 14 22.5 11" fill="none" stroke="#2aa040" stroke-width="3"/><path d="M2.5 12C3 8 6 4 11 3.5" fill="none" stroke="#2aa040" stroke-width="2.5"/><path d="M12.5 7V18M7 12.5H18" stroke="#2aa040" stroke-width="3.2"/></svg>
<svg style="left:1620px;top:1040px" width="24" height="21" viewBox="0 0 24 21"><path d="M1 7H5L11 1.5V19.5L5 14H1Z" fill="none" stroke="#fff" stroke-width="1.3"/><path d="M14 7.5C15.5 9 15.5 12 14 13.5M17 5C19.5 8 19.5 13 17 16M20 2.5C24 7 24 14 20 18.5" fill="none" stroke="#bbb" stroke-width="1.2"/></svg>
<div class="t" style="left:1656px;top:1039px;font-size:21px;color:#fff;">中</div>
<svg style="left:1698px;top:1038px" width="25" height="25" viewBox="0 0 25 25"><rect width="25" height="25" rx="4" fill="#2f8ee8"/><circle cx="12" cy="12" r="6.5" fill="none" stroke="#fff" stroke-width="2.4"/><path d="M15 15L19 19" stroke="#fff" stroke-width="2.4"/><circle cx="19.5" cy="19.5" r="2" fill="#30d060"/></svg>
<div class="t" style="left:1751px;top:1030px;font-size:19px;color:#fff;">18:44 周二</div>
<div class="t" style="left:1747px;top:1050px;font-size:21px;color:#fff;">2022/9/20</div>
<div class="a" style="left:1868px;top:1038px;width:25px;height:22px;background:#fff"></div>
<svg style="left:1876px;top:1043px" width="8" height="11" viewBox="0 0 8 11"><path d="M0 0L8 5.5L0 11Z" fill="#111"/></svg>
<div class="a" style="left:1882px;top:1049px;width:23px;height:21px;background:#d81818"></div>
<div class="t" style="left:1885px;top:1052px;font-size:14px;color:#fff;">10</div>
<div class="a" style="left:1912px;top:1020px;width:2px;height:60px;background:#555"></div></div>
<div id="perf"><div class="a" style="left:3px;top:9px;width:12px;height:85px;border-radius:6px;background:rgba(10,12,18,0.58);box-shadow:0 0 0 1.5px rgba(255,255,255,0.45)"><div class="a" style="left:2px;top:70px;width:8px;height:14px;border-radius:0 0 4px 4px;background:repeating-linear-gradient(#5cb85c 0 1.2px,#3a5a3c 1.2px 2.4px)"></div></div></div>
</body></html>
